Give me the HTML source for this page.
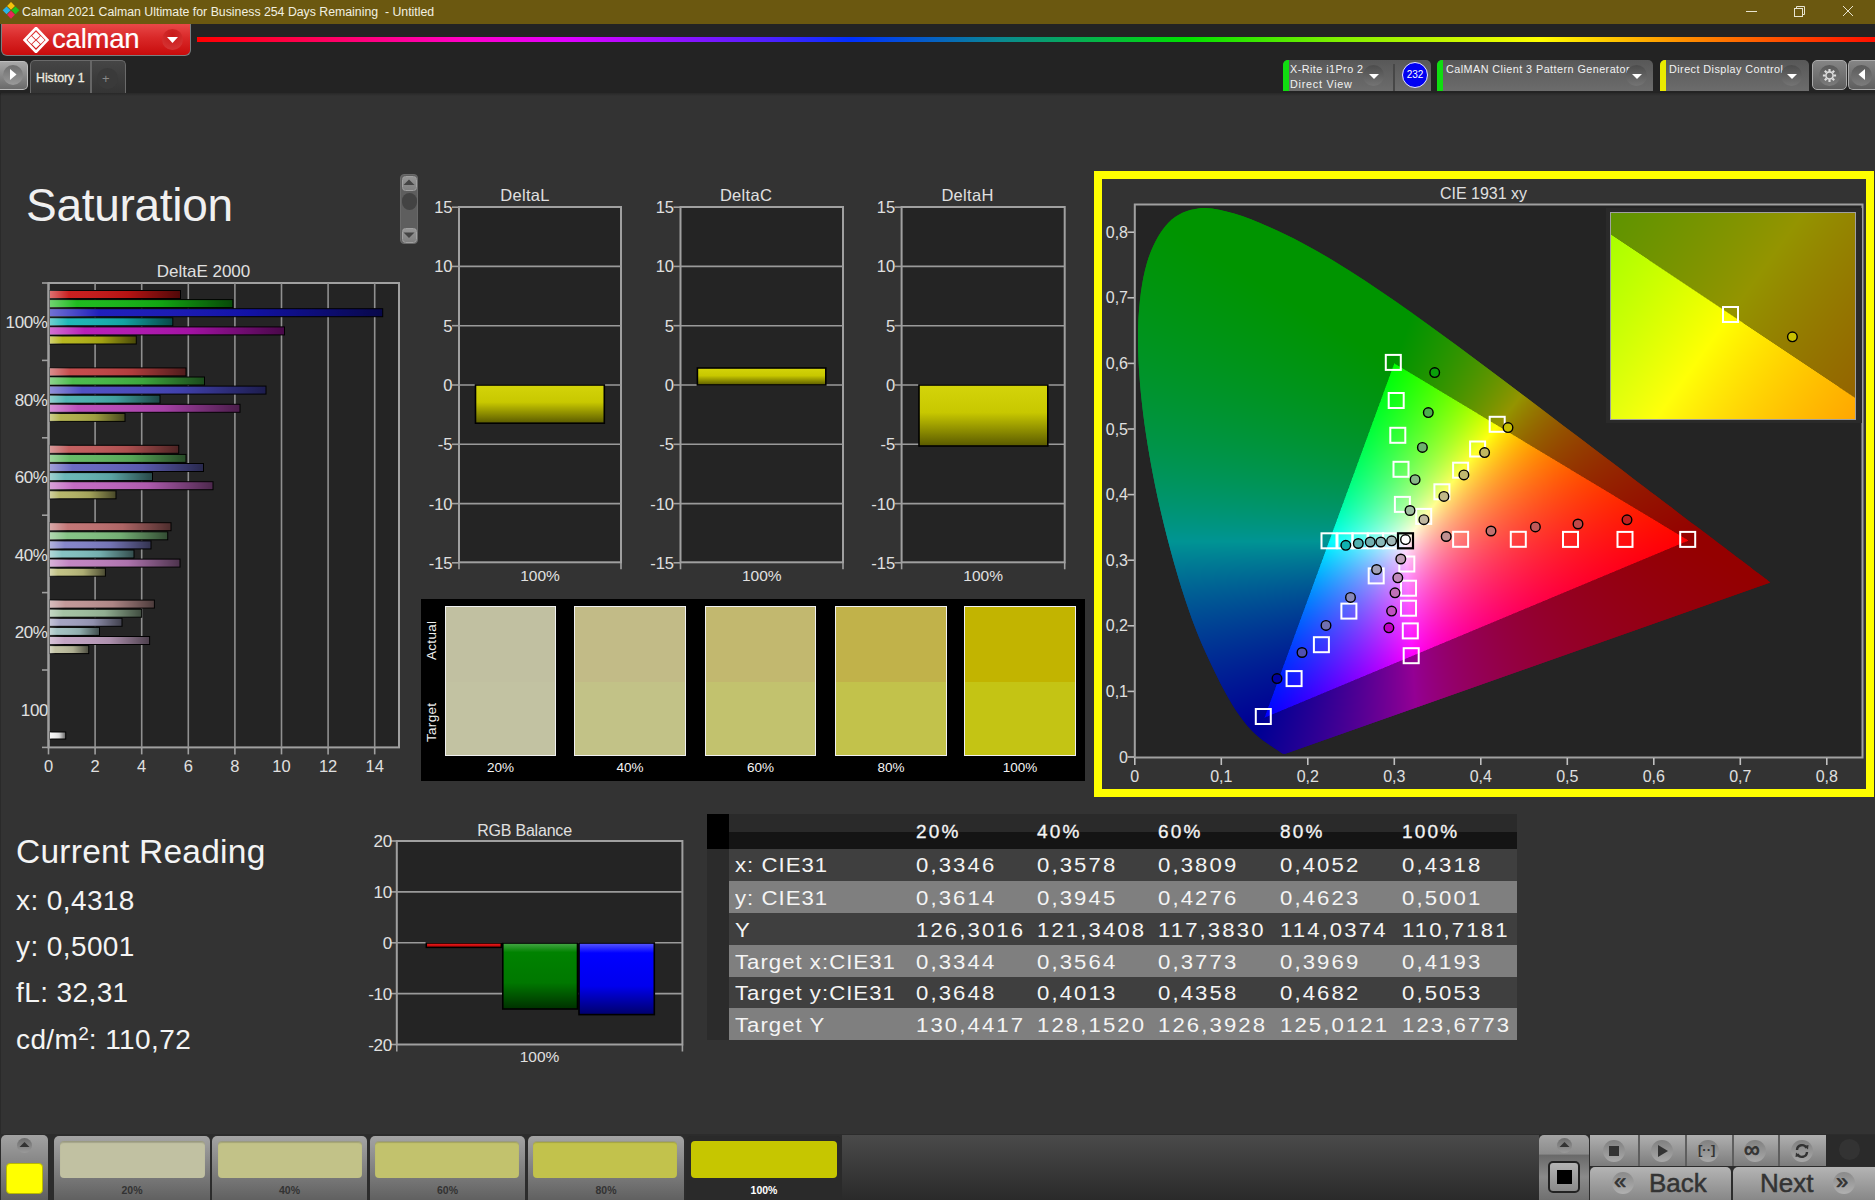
<!DOCTYPE html>
<html><head><meta charset="utf-8">
<style>
*{margin:0;padding:0;box-sizing:border-box}
html,body{width:1875px;height:1200px;overflow:hidden;background:#333;font-family:"Liberation Sans",sans-serif;color:#e6e6e6}
.a{position:absolute}
#title{left:0;top:0;width:1875px;height:24px;background:#6b5810}
#title .t{left:22px;top:5px;font-size:12.3px;color:#f2f0e0;white-space:nowrap}
#hdr{left:0;top:24px;width:1875px;height:69px;background:#232323}
#main{left:0;top:93px;width:1875px;height:1042px;background:#333;border-left:1px solid #2a2a2a}
</style></head>
<body>
<!-- TITLE BAR -->
<div id="title" class="a">
  <svg class="a" style="left:1px;top:2px" width="20" height="20" viewBox="0 0 18 18">
    <rect x="6.5" y="1" width="5" height="5" transform="rotate(45 9 3.5)" fill="#f4c20d"/>
    <rect x="2.5" y="5" width="5" height="5" transform="rotate(45 5 7.5)" fill="#2ab4e8"/>
    <rect x="10.5" y="5" width="5" height="5" transform="rotate(45 13 7.5)" fill="#1cc41c"/>
    <rect x="6.5" y="9" width="5" height="5" transform="rotate(45 9 11.5)" fill="#e8245c"/>
  </svg>
  <div class="a t">Calman 2021 Calman Ultimate for Business 254 Days Remaining &nbsp;- Untitled</div>
  <svg class="a" style="left:1740px;top:0" width="135" height="24">
    <line x1="1746" y1="11.5" x2="1757" y2="11.5" stroke="#e8e4d0" stroke-width="1" transform="translate(-1740 0)"/>
    <g transform="translate(-1740 0)" fill="none" stroke="#e8e4d0" stroke-width="1">
      <rect x="1794.5" y="8.5" width="8" height="8"/>
      <path d="M1796.5 8.5 V6.5 H1804.5 V14.5 H1802.5"/>
      <path d="M1843 6 L1853 16 M1853 6 L1843 16"/>
    </g>
  </svg>
</div>

<!-- HEADER -->
<div id="hdr" class="a">
  <!-- logo -->
  <div class="a" style="left:1px;top:0;width:190px;height:32px;border-radius:0 0 6px 6px;background:linear-gradient(#e84848,#d92828 45%,#c80c0c);border:1px solid #7a7f80;border-top:none"></div>
  <svg class="a" style="left:22.5px;top:2.5px" width="26" height="26" viewBox="1.5 1.5 25 24">
    <g fill="none" stroke="#fff" stroke-width="2.6">
      <path d="M14 2 L25 13.5 L14 25 L3 13.5 Z"/>
    </g>
    <g fill="#fff">
      <rect x="11.3" y="6.6" width="5.4" height="5.4" transform="rotate(45 14 9.3)"/>
      <rect x="6.8" y="10.8" width="5.4" height="5.4" transform="rotate(45 9.5 13.5)"/>
      <rect x="15.8" y="10.8" width="5.4" height="5.4" transform="rotate(45 18.5 13.5)"/>
      <rect x="11.3" y="15" width="5.4" height="5.4" transform="rotate(45 14 17.7)"/>
    </g>
  </svg>
  <div class="a" style="left:52px;top:-1px;font-size:27.5px;color:#fff;letter-spacing:-0.2px;-webkit-text-stroke:0.2px #fff">calman</div>
  <div class="a" style="left:162px;top:5px;width:21px;height:21px;border-radius:50%;background:radial-gradient(circle at 50% 30%,#c81818,#d83a3a)"></div>
  <svg class="a" style="left:166px;top:12px" width="13" height="8"><path d="M1 1 L12 1 L6.5 7 Z" fill="#fff"/></svg>
  <!-- rainbow -->
  <div class="a" style="left:197px;top:13px;width:1678px;height:5px;background:linear-gradient(90deg,#ff0000 0%,#ff00c8 16%,#e000ff 22%,#5020ff 34%,#0030ff 39%,#0a8a90 48%,#00e000 59%,#80f000 68%,#ffff00 80%,#ff9000 88.5%,#ff1000 100%)"></div>
  <!-- play button -->
  <div class="a" style="left:0;top:37px;width:28px;height:29px;border-radius:0 5px 5px 0;background:linear-gradient(#a8a8a8,#6a6a6a);border:1px solid #bdbdbd;border-left:none"></div>
  <div class="a" style="left:3px;top:41px;width:20px;height:20px;border-radius:50%;background:linear-gradient(#6e6e6e,#9a9a9a)"></div>
  <svg class="a" style="left:10px;top:45px" width="8" height="12"><path d="M0 0 L6.5 5.5 L0 11 Z" fill="#fff"/></svg>
  <!-- history tab -->
  <div class="a" style="left:30px;top:36px;width:96px;height:33px;border-radius:5px 5px 0 0;background:linear-gradient(#454545,#343434);border:1.5px solid #6a6a6a;border-bottom:none"></div>
  <div class="a" style="left:90px;top:37px;width:2px;height:32px;background:#666"></div>
  <div class="a" style="left:36px;top:46.5px;font-size:12.3px;color:#f0eee0;letter-spacing:0px;-webkit-text-stroke:0.3px #f0eee0">History 1</div>
  <div class="a" style="left:97px;top:44px;width:21px;height:21px;border-radius:50%;background:#3a3a3a"></div>
  <div class="a" style="left:102px;top:47px;font-size:13px;color:#888">+</div>
  <!-- device buttons -->
  <style>
  .dev{top:36px;height:31px;border-radius:5px 5px 0 0;background:linear-gradient(#585858,#6c6c6c);overflow:hidden}
  .dev .st{left:0;top:0;width:6px;height:31px}
  .dev .tx{font-size:10.8px;color:#f2f2f2;line-height:15.5px;white-space:nowrap;letter-spacing:0.45px}
  .dd{width:21px;height:21px;border-radius:50%;background:linear-gradient(#4c4c4c,#747474)}
  .dd:after{content:"";position:absolute;left:5.5px;top:8.5px;border-left:5px solid transparent;border-right:5px solid transparent;border-top:5px solid #fff}
  </style>
  <div class="a dev" style="left:1283px;width:148px"><div class="a st" style="background:#10dd10"></div>
    <div class="a tx" style="left:7px;top:1.5px;line-height:15px">X-Rite i1Pro 2<br><span style="letter-spacing:0.75px">Direct View</span></div>
    <div class="a dd" style="left:80px;top:5px"></div>
    <div class="a" style="left:110px;top:4px;width:2px;height:27px;background:#474747"></div>
    <div class="a" style="left:119px;top:2px;width:26px;height:26px;border-radius:50%;background:#0000f2;border:1px solid #e8e8ff"></div>
    <div class="a" style="left:119px;top:9px;width:26px;text-align:center;font-size:10px;color:#fff">232</div>
  </div>
  <div class="a dev" style="left:1437px;width:216px"><div class="a st" style="background:#10dd10"></div>
    <div class="a tx" style="left:9px;top:1.5px">CalMAN Client 3 Pattern Generator</div>
    <div class="a dd" style="left:189px;top:5px"></div>
  </div>
  <div class="a dev" style="left:1660px;width:149px"><div class="a st" style="background:#eaea00"></div>
    <div class="a tx" style="left:9px;top:1.5px">Direct Display Control</div>
    <div class="a dd" style="left:121px;top:5px"></div>
  </div>
  <div class="a" style="left:1812px;top:36px;width:35px;height:30px;border-radius:5px;background:linear-gradient(#858585,#5e5e5e);border:1px solid #aaa"></div>
  <div class="a" style="left:1819px;top:41px;width:21px;height:21px;border-radius:50%;background:linear-gradient(#5a5a5a,#7c7c7c)"></div>
  <svg class="a" style="left:1822px;top:44px" width="15" height="15" viewBox="-7.5 -7.5 15 15">
    <g fill="none" stroke="#ddd" stroke-width="1.6"><circle r="3.6"/></g>
    <g stroke="#ddd" stroke-width="2.2" stroke-linecap="butt">
      <path d="M0 -6.6 V-4.2 M0 6.6 V4.2 M-6.6 0 H-4.2 M6.6 0 H4.2 M-4.67 -4.67 L-2.97 -2.97 M4.67 4.67 L2.97 2.97 M-4.67 4.67 L-2.97 2.97 M4.67 -4.67 L2.97 -2.97"/>
    </g>
  </svg>
  <div class="a" style="left:1848px;top:36px;width:30px;height:30px;border-radius:5px 0 0 5px;background:linear-gradient(#858585,#5e5e5e);border:1px solid #aaa;border-right:none"></div>
  <div class="a" style="left:1851px;top:41px;width:21px;height:21px;border-radius:50%;background:linear-gradient(#5a5a5a,#7c7c7c)"></div>
  <svg class="a" style="left:1858px;top:45px" width="8" height="12"><path d="M7 0 L0.5 5.5 L7 11 Z" fill="#fff"/></svg>
</div>


<div id="main" class="a"></div>
<div class="a" style="left:0;top:93px;width:1875px;height:3px;background:linear-gradient(rgba(0,0,0,0.22),rgba(0,0,0,0))"></div>
<div class="a" style="left:26px;top:177.5px;font-size:46px;color:#f0f0f0;letter-spacing:-0.3px;white-space:nowrap">Saturation</div>
<div class="a" style="left:400px;top:174px;width:18px;height:70px;border-radius:4px;background:#5e5e5e;border:1px solid #6a6a6a"></div>
<div class="a" style="left:401.5px;top:175.5px;width:15px;height:15px;border-radius:3.5px;background:linear-gradient(#959595,#808080);border:1px solid #a0a0a0"></div>
<svg class="a" style="left:403px;top:179px" width="12" height="7"><path d="M0.5 6 L6 0.5 L11.5 6 Z" fill="#444"/></svg>
<div class="a" style="left:401.5px;top:193px;width:15px;height:17px;border-radius:7.5px;background:#434343"></div>
<div class="a" style="left:401.5px;top:228px;width:15px;height:15px;border-radius:3.5px;background:linear-gradient(#959595,#808080);border:1px solid #a0a0a0"></div>
<svg class="a" style="left:403px;top:232px" width="12" height="7"><path d="M0.5 0.5 L11.5 0.5 L6 6 Z" fill="#444"/></svg>
<div class="a" style="left:421px;top:599px;width:664px;height:182px;background:#000"></div>
<div class="a" style="left:445px;top:606px;width:111px;height:150px;border:1.3px solid #f0f0f0;background:linear-gradient(#c1c0a1 50.5%,#c2c2a2 50.5%)"></div>
<div class="a" style="left:435px;top:760px;width:131px;text-align:center;font-size:13.5px;color:#f4f4f4">20%</div>
<div class="a" style="left:574px;top:606px;width:112px;height:150px;border:1.3px solid #f0f0f0;background:linear-gradient(#c2bb87 50.5%,#c2c287 50.5%)"></div>
<div class="a" style="left:564px;top:760px;width:132px;text-align:center;font-size:13.5px;color:#f4f4f4">40%</div>
<div class="a" style="left:705px;top:606px;width:111px;height:150px;border:1.3px solid #f0f0f0;background:linear-gradient(#c2b86f 50.5%,#c2c26e 50.5%)"></div>
<div class="a" style="left:695px;top:760px;width:131px;text-align:center;font-size:13.5px;color:#f4f4f4">60%</div>
<div class="a" style="left:835px;top:606px;width:112px;height:150px;border:1.3px solid #f0f0f0;background:linear-gradient(#c1b24a 50.5%,#c2c24b 50.5%)"></div>
<div class="a" style="left:825px;top:760px;width:132px;text-align:center;font-size:13.5px;color:#f4f4f4">80%</div>
<div class="a" style="left:964px;top:606px;width:112px;height:150px;border:1.3px solid #f0f0f0;background:linear-gradient(#c2b400 50.5%,#c4c414 50.5%)"></div>
<div class="a" style="left:954px;top:760px;width:132px;text-align:center;font-size:13.5px;color:#f4f4f4">100%</div>
<div class="a" style="left:421.5px;top:632px;width:20px;height:16px;transform:rotate(-90deg);transform-origin:50% 50%;font-size:13.5px;color:#f0f0f0;white-space:nowrap;text-align:center;letter-spacing:0.3px"><span style="position:relative;left:-10px">Actual</span></div>
<div class="a" style="left:421.5px;top:714px;width:20px;height:16px;transform:rotate(-90deg);transform-origin:50% 50%;font-size:13.5px;color:#f0f0f0;white-space:nowrap;text-align:center;letter-spacing:0.3px"><span style="position:relative;left:-10px">Target</span></div>
<div class="a" style="left:16px;top:833px;font-size:33.5px;color:#f4f4f4;white-space:nowrap;letter-spacing:0.25px">Current Reading</div>
<div class="a" style="left:16px;top:885px;font-size:28px;color:#f4f4f4;white-space:nowrap;letter-spacing:0.4px">x: 0,4318</div>
<div class="a" style="left:16px;top:931px;font-size:28px;color:#f4f4f4;white-space:nowrap;letter-spacing:0.4px">y: 0,5001</div>
<div class="a" style="left:16px;top:977px;font-size:28px;color:#f4f4f4;white-space:nowrap;letter-spacing:0.4px">fL: 32,31</div>
<div class="a" style="left:16px;top:1023px;font-size:28px;color:#f4f4f4;white-space:nowrap;letter-spacing:0.4px">cd/m<span style="font-size:19px;vertical-align:9px;letter-spacing:0">2</span>: 110,72</div>
<div class="a" style="left:707px;top:814px;width:810px;height:35px;background:linear-gradient(#2a2a2a 50%,#141414 50%)"></div>
<div class="a" style="left:707px;top:814px;width:22px;height:35px;background:#000"></div>
<div class="a" style="left:916px;top:821px;font-size:19px;color:#f4f4f4;letter-spacing:2.2px;-webkit-text-stroke:0.3px #f4f4f4">20%</div>
<div class="a" style="left:1037px;top:821px;font-size:19px;color:#f4f4f4;letter-spacing:2.2px;-webkit-text-stroke:0.3px #f4f4f4">40%</div>
<div class="a" style="left:1158px;top:821px;font-size:19px;color:#f4f4f4;letter-spacing:2.2px;-webkit-text-stroke:0.3px #f4f4f4">60%</div>
<div class="a" style="left:1280px;top:821px;font-size:19px;color:#f4f4f4;letter-spacing:2.2px;-webkit-text-stroke:0.3px #f4f4f4">80%</div>
<div class="a" style="left:1402px;top:821px;font-size:19px;color:#f4f4f4;letter-spacing:2.2px;-webkit-text-stroke:0.3px #f4f4f4">100%</div>
<div class="a" style="left:729px;top:848.7px;width:788px;height:32.3px;background:#3f3f3f"></div>
<div class="a" style="left:707px;top:848.7px;width:22px;height:32.3px;background:#2b2b2b"></div>
<div class="a" style="left:735px;top:853.2px;font-size:20.5px;color:#f4f4f4;letter-spacing:0.95px;white-space:nowrap;transform:scaleX(1.08);transform-origin:0 0">x: CIE31</div>
<div class="a" style="left:916px;top:853.2px;font-size:20.5px;color:#f4f4f4;letter-spacing:1.95px;white-space:nowrap;transform:scaleX(1.08);transform-origin:0 0">0,3346</div>
<div class="a" style="left:1037px;top:853.2px;font-size:20.5px;color:#f4f4f4;letter-spacing:1.95px;white-space:nowrap;transform:scaleX(1.08);transform-origin:0 0">0,3578</div>
<div class="a" style="left:1158px;top:853.2px;font-size:20.5px;color:#f4f4f4;letter-spacing:1.95px;white-space:nowrap;transform:scaleX(1.08);transform-origin:0 0">0,3809</div>
<div class="a" style="left:1280px;top:853.2px;font-size:20.5px;color:#f4f4f4;letter-spacing:1.95px;white-space:nowrap;transform:scaleX(1.08);transform-origin:0 0">0,4052</div>
<div class="a" style="left:1402px;top:853.2px;font-size:20.5px;color:#f4f4f4;letter-spacing:1.95px;white-space:nowrap;transform:scaleX(1.08);transform-origin:0 0">0,4318</div>
<div class="a" style="left:729px;top:881.0px;width:788px;height:32.0px;background:#7f7f7f"></div>
<div class="a" style="left:707px;top:881.0px;width:22px;height:32.0px;background:#2b2b2b"></div>
<div class="a" style="left:735px;top:885.5px;font-size:20.5px;color:#f4f4f4;letter-spacing:0.95px;white-space:nowrap;transform:scaleX(1.08);transform-origin:0 0">y: CIE31</div>
<div class="a" style="left:916px;top:885.5px;font-size:20.5px;color:#f4f4f4;letter-spacing:1.95px;white-space:nowrap;transform:scaleX(1.08);transform-origin:0 0">0,3614</div>
<div class="a" style="left:1037px;top:885.5px;font-size:20.5px;color:#f4f4f4;letter-spacing:1.95px;white-space:nowrap;transform:scaleX(1.08);transform-origin:0 0">0,3945</div>
<div class="a" style="left:1158px;top:885.5px;font-size:20.5px;color:#f4f4f4;letter-spacing:1.95px;white-space:nowrap;transform:scaleX(1.08);transform-origin:0 0">0,4276</div>
<div class="a" style="left:1280px;top:885.5px;font-size:20.5px;color:#f4f4f4;letter-spacing:1.95px;white-space:nowrap;transform:scaleX(1.08);transform-origin:0 0">0,4623</div>
<div class="a" style="left:1402px;top:885.5px;font-size:20.5px;color:#f4f4f4;letter-spacing:1.95px;white-space:nowrap;transform:scaleX(1.08);transform-origin:0 0">0,5001</div>
<div class="a" style="left:729px;top:913.0px;width:788px;height:32.2px;background:#3f3f3f"></div>
<div class="a" style="left:707px;top:913.0px;width:22px;height:32.2px;background:#2b2b2b"></div>
<div class="a" style="left:735px;top:917.5px;font-size:20.5px;color:#f4f4f4;letter-spacing:0.95px;white-space:nowrap;transform:scaleX(1.08);transform-origin:0 0">Y</div>
<div class="a" style="left:916px;top:917.5px;font-size:20.5px;color:#f4f4f4;letter-spacing:1.95px;white-space:nowrap;transform:scaleX(1.08);transform-origin:0 0">126,3016</div>
<div class="a" style="left:1037px;top:917.5px;font-size:20.5px;color:#f4f4f4;letter-spacing:1.95px;white-space:nowrap;transform:scaleX(1.08);transform-origin:0 0">121,3408</div>
<div class="a" style="left:1158px;top:917.5px;font-size:20.5px;color:#f4f4f4;letter-spacing:1.95px;white-space:nowrap;transform:scaleX(1.08);transform-origin:0 0">117,3830</div>
<div class="a" style="left:1280px;top:917.5px;font-size:20.5px;color:#f4f4f4;letter-spacing:1.95px;white-space:nowrap;transform:scaleX(1.08);transform-origin:0 0">114,0374</div>
<div class="a" style="left:1402px;top:917.5px;font-size:20.5px;color:#f4f4f4;letter-spacing:1.95px;white-space:nowrap;transform:scaleX(1.08);transform-origin:0 0">110,7181</div>
<div class="a" style="left:729px;top:945.2px;width:788px;height:31.5px;background:#7f7f7f"></div>
<div class="a" style="left:707px;top:945.2px;width:22px;height:31.5px;background:#2b2b2b"></div>
<div class="a" style="left:735px;top:949.7px;font-size:20.5px;color:#f4f4f4;letter-spacing:0.95px;white-space:nowrap;transform:scaleX(1.08);transform-origin:0 0">Target x:CIE31</div>
<div class="a" style="left:916px;top:949.7px;font-size:20.5px;color:#f4f4f4;letter-spacing:1.95px;white-space:nowrap;transform:scaleX(1.08);transform-origin:0 0">0,3344</div>
<div class="a" style="left:1037px;top:949.7px;font-size:20.5px;color:#f4f4f4;letter-spacing:1.95px;white-space:nowrap;transform:scaleX(1.08);transform-origin:0 0">0,3564</div>
<div class="a" style="left:1158px;top:949.7px;font-size:20.5px;color:#f4f4f4;letter-spacing:1.95px;white-space:nowrap;transform:scaleX(1.08);transform-origin:0 0">0,3773</div>
<div class="a" style="left:1280px;top:949.7px;font-size:20.5px;color:#f4f4f4;letter-spacing:1.95px;white-space:nowrap;transform:scaleX(1.08);transform-origin:0 0">0,3969</div>
<div class="a" style="left:1402px;top:949.7px;font-size:20.5px;color:#f4f4f4;letter-spacing:1.95px;white-space:nowrap;transform:scaleX(1.08);transform-origin:0 0">0,4193</div>
<div class="a" style="left:729px;top:976.7px;width:788px;height:31.7px;background:#3f3f3f"></div>
<div class="a" style="left:707px;top:976.7px;width:22px;height:31.7px;background:#2b2b2b"></div>
<div class="a" style="left:735px;top:981.2px;font-size:20.5px;color:#f4f4f4;letter-spacing:0.95px;white-space:nowrap;transform:scaleX(1.08);transform-origin:0 0">Target y:CIE31</div>
<div class="a" style="left:916px;top:981.2px;font-size:20.5px;color:#f4f4f4;letter-spacing:1.95px;white-space:nowrap;transform:scaleX(1.08);transform-origin:0 0">0,3648</div>
<div class="a" style="left:1037px;top:981.2px;font-size:20.5px;color:#f4f4f4;letter-spacing:1.95px;white-space:nowrap;transform:scaleX(1.08);transform-origin:0 0">0,4013</div>
<div class="a" style="left:1158px;top:981.2px;font-size:20.5px;color:#f4f4f4;letter-spacing:1.95px;white-space:nowrap;transform:scaleX(1.08);transform-origin:0 0">0,4358</div>
<div class="a" style="left:1280px;top:981.2px;font-size:20.5px;color:#f4f4f4;letter-spacing:1.95px;white-space:nowrap;transform:scaleX(1.08);transform-origin:0 0">0,4682</div>
<div class="a" style="left:1402px;top:981.2px;font-size:20.5px;color:#f4f4f4;letter-spacing:1.95px;white-space:nowrap;transform:scaleX(1.08);transform-origin:0 0">0,5053</div>
<div class="a" style="left:729px;top:1008.4px;width:788px;height:31.6px;background:#7f7f7f"></div>
<div class="a" style="left:707px;top:1008.4px;width:22px;height:31.6px;background:#2b2b2b"></div>
<div class="a" style="left:735px;top:1012.9px;font-size:20.5px;color:#f4f4f4;letter-spacing:0.95px;white-space:nowrap;transform:scaleX(1.08);transform-origin:0 0">Target Y</div>
<div class="a" style="left:916px;top:1012.9px;font-size:20.5px;color:#f4f4f4;letter-spacing:1.95px;white-space:nowrap;transform:scaleX(1.08);transform-origin:0 0">130,4417</div>
<div class="a" style="left:1037px;top:1012.9px;font-size:20.5px;color:#f4f4f4;letter-spacing:1.95px;white-space:nowrap;transform:scaleX(1.08);transform-origin:0 0">128,1520</div>
<div class="a" style="left:1158px;top:1012.9px;font-size:20.5px;color:#f4f4f4;letter-spacing:1.95px;white-space:nowrap;transform:scaleX(1.08);transform-origin:0 0">126,3928</div>
<div class="a" style="left:1280px;top:1012.9px;font-size:20.5px;color:#f4f4f4;letter-spacing:1.95px;white-space:nowrap;transform:scaleX(1.08);transform-origin:0 0">125,0121</div>
<div class="a" style="left:1402px;top:1012.9px;font-size:20.5px;color:#f4f4f4;letter-spacing:1.95px;white-space:nowrap;transform:scaleX(1.08);transform-origin:0 0">123,6773</div>
<div class="a" style="left:0;top:1134px;width:1875px;height:66px;background:#2c2c2c"></div>
<div class="a" style="left:842px;top:1135px;width:697px;height:65px;background:linear-gradient(#4a4a4a,#2a2a2a)"></div>
<div class="a" style="left:1px;top:1135px;width:47px;height:70px;border-radius:5px;background:linear-gradient(#a2a2a2,#5a5a5a)"></div>
<div class="a" style="left:17px;top:1138px;width:15px;height:15px;border-radius:50%;background:linear-gradient(#6a6a6a,#9a9a9a)"></div>
<svg class="a" style="left:19px;top:1141px" width="11" height="7"><path d="M0.5 6 L5.5 1 L10.5 6 Z" fill="#333"/></svg>
<div class="a" style="left:6px;top:1163px;width:37px;height:31px;border-radius:4px;background:#ffff00;border:1px solid #b8b800"></div>
<div class="a" style="left:54px;top:1136px;width:156px;height:70px;border-radius:5px;background:linear-gradient(#a4a4a4,#5a5a5a)"></div>
<div class="a" style="left:60px;top:1141px;width:145px;height:37px;border-radius:4px;background:#c1c1a2;border-top:1px solid #9a9a80;box-shadow:inset 0 1px 1px rgba(0,0,0,0.15)"></div>
<div class="a" style="left:54px;top:1184px;width:156px;text-align:center;font-size:10.5px;font-weight:bold;color:#333">20%</div>
<div class="a" style="left:212px;top:1136px;width:155px;height:70px;border-radius:5px;background:linear-gradient(#a4a4a4,#5a5a5a)"></div>
<div class="a" style="left:218px;top:1141px;width:144px;height:37px;border-radius:4px;background:#c2c288;border-top:1px solid #9a9a80;box-shadow:inset 0 1px 1px rgba(0,0,0,0.15)"></div>
<div class="a" style="left:212px;top:1184px;width:155px;text-align:center;font-size:10.5px;font-weight:bold;color:#333">40%</div>
<div class="a" style="left:370px;top:1136px;width:155px;height:70px;border-radius:5px;background:linear-gradient(#a4a4a4,#5a5a5a)"></div>
<div class="a" style="left:375px;top:1141px;width:144px;height:37px;border-radius:4px;background:#c2c26d;border-top:1px solid #9a9a80;box-shadow:inset 0 1px 1px rgba(0,0,0,0.15)"></div>
<div class="a" style="left:370px;top:1184px;width:155px;text-align:center;font-size:10.5px;font-weight:bold;color:#333">60%</div>
<div class="a" style="left:528px;top:1136px;width:156px;height:70px;border-radius:5px;background:linear-gradient(#a4a4a4,#5a5a5a)"></div>
<div class="a" style="left:533px;top:1141px;width:144px;height:37px;border-radius:4px;background:#c2c24c;border-top:1px solid #9a9a80;box-shadow:inset 0 1px 1px rgba(0,0,0,0.15)"></div>
<div class="a" style="left:528px;top:1184px;width:156px;text-align:center;font-size:10.5px;font-weight:bold;color:#333">80%</div>
<div class="a" style="left:686px;top:1136px;width:156px;height:70px;border-radius:5px;background:#2a2a2a"></div>
<div class="a" style="left:691px;top:1141px;width:146px;height:37px;border-radius:4px;background:#c6c600"></div>
<div class="a" style="left:686px;top:1184px;width:156px;text-align:center;font-size:10.5px;font-weight:bold;color:#fff">100%</div>
<div class="a" style="left:1539px;top:1135px;width:50px;height:70px;border-radius:5px;background:linear-gradient(#a4a4a4 0,#8c8c8c 27%,#6a6a6a 29%,#8a8a8a 60%,#6a6a6a 100%)"></div>
<div class="a" style="left:1557px;top:1138px;width:15px;height:15px;border-radius:50%;background:linear-gradient(#6c6c6c,#9a9a9a)"></div>
<svg class="a" style="left:1559px;top:1141px" width="11" height="7"><path d="M0.5 6 L5.5 1 L10.5 6 Z" fill="#333"/></svg>
<div class="a" style="left:1548px;top:1161px;width:32px;height:32px;border-radius:5px;border:2.5px solid #222;background:linear-gradient(#b4b4b4,#8a8a8a)"></div>
<div class="a" style="left:1557px;top:1170px;width:15px;height:14px;background:#000"></div>
<div class="a" style="left:1590px;top:1135px;width:236px;height:31px;background:linear-gradient(#b0b0b0,#7c7c7c)"></div>
<div class="a" style="left:1638px;top:1135px;width:2px;height:31px;background:#5e5e5e"></div>
<div class="a" style="left:1685px;top:1135px;width:2px;height:31px;background:#5e5e5e"></div>
<div class="a" style="left:1732px;top:1135px;width:2px;height:31px;background:#5e5e5e"></div>
<div class="a" style="left:1778px;top:1135px;width:2px;height:31px;background:#5e5e5e"></div>
<div class="a" style="left:1603px;top:1140px;width:22px;height:22px;border-radius:50%;background:linear-gradient(#808080,#a8a8a8)"></div>
<div class="a" style="left:1651px;top:1140px;width:22px;height:22px;border-radius:50%;background:linear-gradient(#808080,#a8a8a8)"></div>
<div class="a" style="left:1697px;top:1140px;width:22px;height:22px;border-radius:50%;background:linear-gradient(#808080,#a8a8a8)"></div>
<div class="a" style="left:1744px;top:1140px;width:22px;height:22px;border-radius:50%;background:linear-gradient(#808080,#a8a8a8)"></div>
<div class="a" style="left:1791px;top:1140px;width:22px;height:22px;border-radius:50%;background:linear-gradient(#808080,#a8a8a8)"></div>
<div class="a" style="left:1609px;top:1146px;width:10px;height:10px;background:#333"></div>
<svg class="a" style="left:1657px;top:1144px" width="12" height="14"><path d="M1 1 L11 7 L1 13 Z" fill="#333"/></svg>
<div class="a" style="left:1698px;top:1142px;font-size:13px;font-weight:bold;color:#333">[&#183;&#183;]</div>
<div class="a" style="left:1744px;top:1137px;font-size:22px;color:#333;-webkit-text-stroke:0.8px #333">&#8734;</div>
<svg class="a" style="left:1794px;top:1143px" width="16" height="16" viewBox="0 0 16 16"><path d="M3 7 A5 5 0 0 1 12.5 5" fill="none" stroke="#333" stroke-width="2.4"/><path d="M13 9 A5 5 0 0 1 3.5 11" fill="none" stroke="#333" stroke-width="2.4"/><path d="M10 3 L14.5 2 L14 6.5 Z M6 13 L1.5 14 L2 9.5 Z" fill="#333"/></svg>
<div class="a" style="left:1826px;top:1135px;width:49px;height:31px;background:#2a2a2a"></div>
<div class="a" style="left:1839px;top:1139px;width:21px;height:21px;border-radius:50%;background:#333"></div>
<div class="a" style="left:1590px;top:1167px;width:141px;height:40px;border-radius:5px 5px 0 0;background:linear-gradient(#b4b4b4,#7e7e7e)"></div>
<div class="a" style="left:1733px;top:1167px;width:145px;height:40px;border-radius:5px 0 0 0;background:linear-gradient(#b4b4b4,#7e7e7e)"></div>
<div class="a" style="left:1612px;top:1172px;width:22px;height:22px;border-radius:50%;background:linear-gradient(#8a8a8a,#b0b0b0)"></div>
<div class="a" style="left:1614px;top:1169px;font-size:22px;color:#333;-webkit-text-stroke:0.6px #333">&#171;</div>
<div class="a" style="left:1833px;top:1172px;width:22px;height:22px;border-radius:50%;background:linear-gradient(#8a8a8a,#b0b0b0)"></div>
<div class="a" style="left:1836px;top:1169px;font-size:22px;color:#333;-webkit-text-stroke:0.6px #333">&#187;</div>
<div class="a" style="left:1649px;top:1168px;font-size:26px;color:#333;-webkit-text-stroke:0.5px #333">Back</div>
<div class="a" style="left:1760px;top:1168px;font-size:26px;color:#333;-webkit-text-stroke:0.5px #333">Next</div>
<svg class="a" style="left:0;top:0" width="1875" height="1200"><defs><linearGradient id="gsh" x1="0" x2="1" y1="0" y2="0"><stop offset="0" stop-color="#fff" stop-opacity="0.4"/><stop offset="0.15" stop-color="#fff" stop-opacity="0.05"/><stop offset="0.6" stop-color="#000" stop-opacity="0.1"/><stop offset="1" stop-color="#000" stop-opacity="0.6"/></linearGradient><linearGradient id="gy" x1="0" x2="0" y1="0" y2="1"><stop offset="0" stop-color="#d4d40a"/><stop offset="0.45" stop-color="#c8c800"/><stop offset="1" stop-color="#5a5a00"/></linearGradient><linearGradient id="gr" x1="0" x2="0" y1="0" y2="1"><stop offset="0" stop-color="#ff2020"/><stop offset="1" stop-color="#a00000"/></linearGradient><linearGradient id="gg" x1="0" x2="0" y1="0" y2="1"><stop offset="0" stop-color="#48a848"/><stop offset="0.14" stop-color="#008200"/><stop offset="0.6" stop-color="#007800"/><stop offset="1" stop-color="#003000"/></linearGradient><linearGradient id="gb" x1="0" x2="0" y1="0" y2="1"><stop offset="0" stop-color="#5a5aff"/><stop offset="0.14" stop-color="#0000ff"/><stop offset="0.6" stop-color="#0000ee"/><stop offset="1" stop-color="#00006a"/></linearGradient></defs><rect x="48.5" y="283" width="350.5" height="464.4" fill="#242424" stroke="#a0a0a0" stroke-width="2"/><line x1="95.1" y1="283" x2="95.1" y2="747.4" stroke="#909090" stroke-width="1.6"/><line x1="141.7" y1="283" x2="141.7" y2="747.4" stroke="#909090" stroke-width="1.6"/><line x1="188.3" y1="283" x2="188.3" y2="747.4" stroke="#909090" stroke-width="1.6"/><line x1="234.9" y1="283" x2="234.9" y2="747.4" stroke="#909090" stroke-width="1.6"/><line x1="281.5" y1="283" x2="281.5" y2="747.4" stroke="#909090" stroke-width="1.6"/><line x1="328.1" y1="283" x2="328.1" y2="747.4" stroke="#909090" stroke-width="1.6"/><line x1="374.7" y1="283" x2="374.7" y2="747.4" stroke="#909090" stroke-width="1.6"/><line x1="42" y1="283.0" x2="48.5" y2="283.0" stroke="#a0a0a0" stroke-width="1.6"/><line x1="42" y1="360.4" x2="48.5" y2="360.4" stroke="#a0a0a0" stroke-width="1.6"/><line x1="42" y1="437.8" x2="48.5" y2="437.8" stroke="#a0a0a0" stroke-width="1.6"/><line x1="42" y1="515.2" x2="48.5" y2="515.2" stroke="#a0a0a0" stroke-width="1.6"/><line x1="42" y1="592.6" x2="48.5" y2="592.6" stroke="#a0a0a0" stroke-width="1.6"/><line x1="42" y1="670.0" x2="48.5" y2="670.0" stroke="#a0a0a0" stroke-width="1.6"/><line x1="42" y1="747.4" x2="48.5" y2="747.4" stroke="#a0a0a0" stroke-width="1.6"/><line x1="48.5" y1="747.4" x2="48.5" y2="754.4" stroke="#a0a0a0" stroke-width="1.6"/><text x="48.5" y="772" font-size="16.5" text-anchor="middle" font-family="Liberation Sans" fill="#e0e0e0">0</text><line x1="95.1" y1="747.4" x2="95.1" y2="754.4" stroke="#a0a0a0" stroke-width="1.6"/><text x="95.1" y="772" font-size="16.5" text-anchor="middle" font-family="Liberation Sans" fill="#e0e0e0">2</text><line x1="141.7" y1="747.4" x2="141.7" y2="754.4" stroke="#a0a0a0" stroke-width="1.6"/><text x="141.7" y="772" font-size="16.5" text-anchor="middle" font-family="Liberation Sans" fill="#e0e0e0">4</text><line x1="188.3" y1="747.4" x2="188.3" y2="754.4" stroke="#a0a0a0" stroke-width="1.6"/><text x="188.3" y="772" font-size="16.5" text-anchor="middle" font-family="Liberation Sans" fill="#e0e0e0">6</text><line x1="234.9" y1="747.4" x2="234.9" y2="754.4" stroke="#a0a0a0" stroke-width="1.6"/><text x="234.9" y="772" font-size="16.5" text-anchor="middle" font-family="Liberation Sans" fill="#e0e0e0">8</text><line x1="281.5" y1="747.4" x2="281.5" y2="754.4" stroke="#a0a0a0" stroke-width="1.6"/><text x="281.5" y="772" font-size="16.5" text-anchor="middle" font-family="Liberation Sans" fill="#e0e0e0">10</text><line x1="328.1" y1="747.4" x2="328.1" y2="754.4" stroke="#a0a0a0" stroke-width="1.6"/><text x="328.1" y="772" font-size="16.5" text-anchor="middle" font-family="Liberation Sans" fill="#e0e0e0">12</text><line x1="374.7" y1="747.4" x2="374.7" y2="754.4" stroke="#a0a0a0" stroke-width="1.6"/><text x="374.7" y="772" font-size="16.5" text-anchor="middle" font-family="Liberation Sans" fill="#e0e0e0">14</text><text x="47.5" y="328" font-size="17" letter-spacing="-0.4" text-anchor="end" font-family="Liberation Sans" fill="#e0e0e0">100%</text><text x="47.5" y="405.5" font-size="17" letter-spacing="-0.4" text-anchor="end" font-family="Liberation Sans" fill="#e0e0e0">80%</text><text x="47.5" y="483" font-size="17" letter-spacing="-0.4" text-anchor="end" font-family="Liberation Sans" fill="#e0e0e0">60%</text><text x="47.5" y="561" font-size="17" letter-spacing="-0.4" text-anchor="end" font-family="Liberation Sans" fill="#e0e0e0">40%</text><text x="47.5" y="637.5" font-size="17" letter-spacing="-0.4" text-anchor="end" font-family="Liberation Sans" fill="#e0e0e0">20%</text><text x="48" y="715.5" font-size="17" letter-spacing="-0.4" text-anchor="end" font-family="Liberation Sans" fill="#e0e0e0">100</text><text x="203.5" y="276.5" font-size="17" text-anchor="middle" font-family="Liberation Sans" fill="#e0e0e0">DeltaE 2000</text><rect x="49.5" y="290.5" width="131.0" height="8" fill="#c81414" stroke="#000" stroke-width="1"/><rect x="49.5" y="290.5" width="131.0" height="8" fill="url(#gsh)"/><rect x="49.5" y="299.6" width="183.3" height="8" fill="#14b814" stroke="#000" stroke-width="1"/><rect x="49.5" y="299.6" width="183.3" height="8" fill="url(#gsh)"/><rect x="49.5" y="308.7" width="333.2" height="8" fill="#1414b8" stroke="#000" stroke-width="1"/><rect x="49.5" y="308.7" width="333.2" height="8" fill="url(#gsh)"/><rect x="49.5" y="317.8" width="123.3" height="8" fill="#14b4b4" stroke="#000" stroke-width="1"/><rect x="49.5" y="317.8" width="123.3" height="8" fill="url(#gsh)"/><rect x="49.5" y="326.9" width="235.0" height="8" fill="#b414b4" stroke="#000" stroke-width="1"/><rect x="49.5" y="326.9" width="235.0" height="8" fill="url(#gsh)"/><rect x="49.5" y="336.0" width="86.8" height="8" fill="#b4b414" stroke="#000" stroke-width="1"/><rect x="49.5" y="336.0" width="86.8" height="8" fill="url(#gsh)"/><rect x="49.5" y="367.9" width="136.5" height="8" fill="#c44444" stroke="#000" stroke-width="1"/><rect x="49.5" y="367.9" width="136.5" height="8" fill="url(#gsh)"/><rect x="49.5" y="377.0" width="155.0" height="8" fill="#44b844" stroke="#000" stroke-width="1"/><rect x="49.5" y="377.0" width="155.0" height="8" fill="url(#gsh)"/><rect x="49.5" y="386.1" width="216.5" height="8" fill="#4848c0" stroke="#000" stroke-width="1"/><rect x="49.5" y="386.1" width="216.5" height="8" fill="url(#gsh)"/><rect x="49.5" y="395.2" width="110.5" height="8" fill="#48b0b0" stroke="#000" stroke-width="1"/><rect x="49.5" y="395.2" width="110.5" height="8" fill="url(#gsh)"/><rect x="49.5" y="404.3" width="190.5" height="8" fill="#b848b8" stroke="#000" stroke-width="1"/><rect x="49.5" y="404.3" width="190.5" height="8" fill="url(#gsh)"/><rect x="49.5" y="413.4" width="75.5" height="8" fill="#b0b048" stroke="#000" stroke-width="1"/><rect x="49.5" y="413.4" width="75.5" height="8" fill="url(#gsh)"/><rect x="49.5" y="445.3" width="129.2" height="8" fill="#c05858" stroke="#000" stroke-width="1"/><rect x="49.5" y="445.3" width="129.2" height="8" fill="url(#gsh)"/><rect x="49.5" y="454.4" width="136.5" height="8" fill="#60b860" stroke="#000" stroke-width="1"/><rect x="49.5" y="454.4" width="136.5" height="8" fill="url(#gsh)"/><rect x="49.5" y="463.5" width="154.0" height="8" fill="#6464c0" stroke="#000" stroke-width="1"/><rect x="49.5" y="463.5" width="154.0" height="8" fill="url(#gsh)"/><rect x="49.5" y="472.6" width="103.0" height="8" fill="#64b4b4" stroke="#000" stroke-width="1"/><rect x="49.5" y="472.6" width="103.0" height="8" fill="url(#gsh)"/><rect x="49.5" y="481.7" width="163.5" height="8" fill="#c064c0" stroke="#000" stroke-width="1"/><rect x="49.5" y="481.7" width="163.5" height="8" fill="url(#gsh)"/><rect x="49.5" y="490.8" width="66.5" height="8" fill="#b4b464" stroke="#000" stroke-width="1"/><rect x="49.5" y="490.8" width="66.5" height="8" fill="url(#gsh)"/><rect x="49.5" y="522.7" width="121.5" height="8" fill="#c07070" stroke="#000" stroke-width="1"/><rect x="49.5" y="522.7" width="121.5" height="8" fill="url(#gsh)"/><rect x="49.5" y="531.8" width="118.2" height="8" fill="#80c080" stroke="#000" stroke-width="1"/><rect x="49.5" y="531.8" width="118.2" height="8" fill="url(#gsh)"/><rect x="49.5" y="540.9" width="101.5" height="8" fill="#8080c8" stroke="#000" stroke-width="1"/><rect x="49.5" y="540.9" width="101.5" height="8" fill="url(#gsh)"/><rect x="49.5" y="550.0" width="84.5" height="8" fill="#80c0c0" stroke="#000" stroke-width="1"/><rect x="49.5" y="550.0" width="84.5" height="8" fill="url(#gsh)"/><rect x="49.5" y="559.1" width="130.5" height="8" fill="#c080c0" stroke="#000" stroke-width="1"/><rect x="49.5" y="559.1" width="130.5" height="8" fill="url(#gsh)"/><rect x="49.5" y="568.2" width="55.9" height="8" fill="#c0c080" stroke="#000" stroke-width="1"/><rect x="49.5" y="568.2" width="55.9" height="8" fill="url(#gsh)"/><rect x="49.5" y="600.1" width="104.9" height="8" fill="#c09494" stroke="#000" stroke-width="1"/><rect x="49.5" y="600.1" width="104.9" height="8" fill="url(#gsh)"/><rect x="49.5" y="609.2" width="92.2" height="8" fill="#a0c0a0" stroke="#000" stroke-width="1"/><rect x="49.5" y="609.2" width="92.2" height="8" fill="url(#gsh)"/><rect x="49.5" y="618.3" width="72.5" height="8" fill="#a0a0c0" stroke="#000" stroke-width="1"/><rect x="49.5" y="618.3" width="72.5" height="8" fill="url(#gsh)"/><rect x="49.5" y="627.4" width="50.0" height="8" fill="#a0c0c0" stroke="#000" stroke-width="1"/><rect x="49.5" y="627.4" width="50.0" height="8" fill="url(#gsh)"/><rect x="49.5" y="636.5" width="100.1" height="8" fill="#c0a0c0" stroke="#000" stroke-width="1"/><rect x="49.5" y="636.5" width="100.1" height="8" fill="url(#gsh)"/><rect x="49.5" y="645.6" width="39.2" height="8" fill="#c0c0a0" stroke="#000" stroke-width="1"/><rect x="49.5" y="645.6" width="39.2" height="8" fill="url(#gsh)"/><rect x="49.5" y="732" width="16.2" height="7" fill="#f4f4f4" stroke="#000" stroke-width="1"/><rect x="49.5" y="732" width="16.2" height="7" fill="url(#gsh)"/><line x1="48.5" y1="283" x2="48.5" y2="747.4" stroke="#a0a0a0" stroke-width="2"/><rect x="459" y="207" width="162.0" height="355.3" fill="#242424" stroke="#a0a0a0" stroke-width="2"/><line x1="452" y1="207.2" x2="459" y2="207.2" stroke="#a0a0a0" stroke-width="1.6"/><text x="452.5" y="213.2" font-size="16.5" text-anchor="end" font-family="Liberation Sans" fill="#e0e0e0">15</text><line x1="459" y1="266.4" x2="621" y2="266.4" stroke="#9a9a9a" stroke-width="1.6"/><line x1="452" y1="266.4" x2="459" y2="266.4" stroke="#a0a0a0" stroke-width="1.6"/><text x="452.5" y="272.4" font-size="16.5" text-anchor="end" font-family="Liberation Sans" fill="#e0e0e0">10</text><line x1="459" y1="325.7" x2="621" y2="325.7" stroke="#9a9a9a" stroke-width="1.6"/><line x1="452" y1="325.7" x2="459" y2="325.7" stroke="#a0a0a0" stroke-width="1.6"/><text x="452.5" y="331.7" font-size="16.5" text-anchor="end" font-family="Liberation Sans" fill="#e0e0e0">5</text><line x1="459" y1="385.0" x2="621" y2="385.0" stroke="#9a9a9a" stroke-width="1.6"/><line x1="452" y1="385.0" x2="459" y2="385.0" stroke="#a0a0a0" stroke-width="1.6"/><text x="452.5" y="391.0" font-size="16.5" text-anchor="end" font-family="Liberation Sans" fill="#e0e0e0">0</text><line x1="459" y1="444.3" x2="621" y2="444.3" stroke="#9a9a9a" stroke-width="1.6"/><line x1="452" y1="444.3" x2="459" y2="444.3" stroke="#a0a0a0" stroke-width="1.6"/><text x="452.5" y="450.3" font-size="16.5" text-anchor="end" font-family="Liberation Sans" fill="#e0e0e0">-5</text><line x1="459" y1="503.6" x2="621" y2="503.6" stroke="#9a9a9a" stroke-width="1.6"/><line x1="452" y1="503.6" x2="459" y2="503.6" stroke="#a0a0a0" stroke-width="1.6"/><text x="452.5" y="509.6" font-size="16.5" text-anchor="end" font-family="Liberation Sans" fill="#e0e0e0">-10</text><line x1="452" y1="562.8" x2="459" y2="562.8" stroke="#a0a0a0" stroke-width="1.6"/><text x="452.5" y="568.8" font-size="16.5" text-anchor="end" font-family="Liberation Sans" fill="#e0e0e0">-15</text><line x1="459" y1="562.3" x2="459" y2="569.3" stroke="#a0a0a0" stroke-width="1.6"/><line x1="621" y1="562.3" x2="621" y2="569.3" stroke="#a0a0a0" stroke-width="1.6"/><text x="525" y="201" font-size="16.5" text-anchor="middle" letter-spacing="0.3" font-family="Liberation Sans" fill="#e0e0e0">DeltaL</text><text x="540.0" y="580.5" font-size="15.5" text-anchor="middle" font-family="Liberation Sans" fill="#e0e0e0">100%</text><rect x="475.5" y="385" width="128.8" height="38.2" fill="url(#gy)" stroke="#000" stroke-width="1.6"/><rect x="680.5" y="207" width="162.5" height="355.3" fill="#242424" stroke="#a0a0a0" stroke-width="2"/><line x1="673.5" y1="207.2" x2="680.5" y2="207.2" stroke="#a0a0a0" stroke-width="1.6"/><text x="674.0" y="213.2" font-size="16.5" text-anchor="end" font-family="Liberation Sans" fill="#e0e0e0">15</text><line x1="680.5" y1="266.4" x2="843" y2="266.4" stroke="#9a9a9a" stroke-width="1.6"/><line x1="673.5" y1="266.4" x2="680.5" y2="266.4" stroke="#a0a0a0" stroke-width="1.6"/><text x="674.0" y="272.4" font-size="16.5" text-anchor="end" font-family="Liberation Sans" fill="#e0e0e0">10</text><line x1="680.5" y1="325.7" x2="843" y2="325.7" stroke="#9a9a9a" stroke-width="1.6"/><line x1="673.5" y1="325.7" x2="680.5" y2="325.7" stroke="#a0a0a0" stroke-width="1.6"/><text x="674.0" y="331.7" font-size="16.5" text-anchor="end" font-family="Liberation Sans" fill="#e0e0e0">5</text><line x1="680.5" y1="385.0" x2="843" y2="385.0" stroke="#9a9a9a" stroke-width="1.6"/><line x1="673.5" y1="385.0" x2="680.5" y2="385.0" stroke="#a0a0a0" stroke-width="1.6"/><text x="674.0" y="391.0" font-size="16.5" text-anchor="end" font-family="Liberation Sans" fill="#e0e0e0">0</text><line x1="680.5" y1="444.3" x2="843" y2="444.3" stroke="#9a9a9a" stroke-width="1.6"/><line x1="673.5" y1="444.3" x2="680.5" y2="444.3" stroke="#a0a0a0" stroke-width="1.6"/><text x="674.0" y="450.3" font-size="16.5" text-anchor="end" font-family="Liberation Sans" fill="#e0e0e0">-5</text><line x1="680.5" y1="503.6" x2="843" y2="503.6" stroke="#9a9a9a" stroke-width="1.6"/><line x1="673.5" y1="503.6" x2="680.5" y2="503.6" stroke="#a0a0a0" stroke-width="1.6"/><text x="674.0" y="509.6" font-size="16.5" text-anchor="end" font-family="Liberation Sans" fill="#e0e0e0">-10</text><line x1="673.5" y1="562.8" x2="680.5" y2="562.8" stroke="#a0a0a0" stroke-width="1.6"/><text x="674.0" y="568.8" font-size="16.5" text-anchor="end" font-family="Liberation Sans" fill="#e0e0e0">-15</text><line x1="680.5" y1="562.3" x2="680.5" y2="569.3" stroke="#a0a0a0" stroke-width="1.6"/><line x1="843" y1="562.3" x2="843" y2="569.3" stroke="#a0a0a0" stroke-width="1.6"/><text x="746" y="201" font-size="16.5" text-anchor="middle" letter-spacing="0.3" font-family="Liberation Sans" fill="#e0e0e0">DeltaC</text><text x="761.8" y="580.5" font-size="15.5" text-anchor="middle" font-family="Liberation Sans" fill="#e0e0e0">100%</text><rect x="697.4" y="368" width="128.4" height="17.0" fill="url(#gy)" stroke="#000" stroke-width="1.6"/><rect x="901.6" y="207" width="163.1" height="355.3" fill="#242424" stroke="#a0a0a0" stroke-width="2"/><line x1="894.6" y1="207.2" x2="901.6" y2="207.2" stroke="#a0a0a0" stroke-width="1.6"/><text x="895.1" y="213.2" font-size="16.5" text-anchor="end" font-family="Liberation Sans" fill="#e0e0e0">15</text><line x1="901.6" y1="266.4" x2="1064.7" y2="266.4" stroke="#9a9a9a" stroke-width="1.6"/><line x1="894.6" y1="266.4" x2="901.6" y2="266.4" stroke="#a0a0a0" stroke-width="1.6"/><text x="895.1" y="272.4" font-size="16.5" text-anchor="end" font-family="Liberation Sans" fill="#e0e0e0">10</text><line x1="901.6" y1="325.7" x2="1064.7" y2="325.7" stroke="#9a9a9a" stroke-width="1.6"/><line x1="894.6" y1="325.7" x2="901.6" y2="325.7" stroke="#a0a0a0" stroke-width="1.6"/><text x="895.1" y="331.7" font-size="16.5" text-anchor="end" font-family="Liberation Sans" fill="#e0e0e0">5</text><line x1="901.6" y1="385.0" x2="1064.7" y2="385.0" stroke="#9a9a9a" stroke-width="1.6"/><line x1="894.6" y1="385.0" x2="901.6" y2="385.0" stroke="#a0a0a0" stroke-width="1.6"/><text x="895.1" y="391.0" font-size="16.5" text-anchor="end" font-family="Liberation Sans" fill="#e0e0e0">0</text><line x1="901.6" y1="444.3" x2="1064.7" y2="444.3" stroke="#9a9a9a" stroke-width="1.6"/><line x1="894.6" y1="444.3" x2="901.6" y2="444.3" stroke="#a0a0a0" stroke-width="1.6"/><text x="895.1" y="450.3" font-size="16.5" text-anchor="end" font-family="Liberation Sans" fill="#e0e0e0">-5</text><line x1="901.6" y1="503.6" x2="1064.7" y2="503.6" stroke="#9a9a9a" stroke-width="1.6"/><line x1="894.6" y1="503.6" x2="901.6" y2="503.6" stroke="#a0a0a0" stroke-width="1.6"/><text x="895.1" y="509.6" font-size="16.5" text-anchor="end" font-family="Liberation Sans" fill="#e0e0e0">-10</text><line x1="894.6" y1="562.8" x2="901.6" y2="562.8" stroke="#a0a0a0" stroke-width="1.6"/><text x="895.1" y="568.8" font-size="16.5" text-anchor="end" font-family="Liberation Sans" fill="#e0e0e0">-15</text><line x1="901.6" y1="562.3" x2="901.6" y2="569.3" stroke="#a0a0a0" stroke-width="1.6"/><line x1="1064.7" y1="562.3" x2="1064.7" y2="569.3" stroke="#a0a0a0" stroke-width="1.6"/><text x="967.5" y="201" font-size="16.5" text-anchor="middle" letter-spacing="0.3" font-family="Liberation Sans" fill="#e0e0e0">DeltaH</text><text x="983.2" y="580.5" font-size="15.5" text-anchor="middle" font-family="Liberation Sans" fill="#e0e0e0">100%</text><rect x="919" y="385" width="128.8" height="61.0" fill="url(#gy)" stroke="#000" stroke-width="1.6"/><rect x="396.8" y="841" width="285.6" height="203.5" fill="#242424" stroke="#a0a0a0" stroke-width="2"/><line x1="390.8" y1="841.0" x2="396.8" y2="841.0" stroke="#a0a0a0" stroke-width="1.6"/><text x="391.8" y="847.0" font-size="17" letter-spacing="-0.3" text-anchor="end" font-family="Liberation Sans" fill="#e0e0e0">20</text><line x1="396.8" y1="891.9" x2="682.4" y2="891.9" stroke="#9a9a9a" stroke-width="1.6"/><line x1="390.8" y1="891.9" x2="396.8" y2="891.9" stroke="#a0a0a0" stroke-width="1.6"/><text x="391.8" y="897.9" font-size="17" letter-spacing="-0.3" text-anchor="end" font-family="Liberation Sans" fill="#e0e0e0">10</text><line x1="396.8" y1="942.8" x2="682.4" y2="942.8" stroke="#9a9a9a" stroke-width="1.6"/><line x1="390.8" y1="942.8" x2="396.8" y2="942.8" stroke="#a0a0a0" stroke-width="1.6"/><text x="391.8" y="948.8" font-size="17" letter-spacing="-0.3" text-anchor="end" font-family="Liberation Sans" fill="#e0e0e0">0</text><line x1="396.8" y1="993.6" x2="682.4" y2="993.6" stroke="#9a9a9a" stroke-width="1.6"/><line x1="390.8" y1="993.6" x2="396.8" y2="993.6" stroke="#a0a0a0" stroke-width="1.6"/><text x="391.8" y="999.6" font-size="17" letter-spacing="-0.3" text-anchor="end" font-family="Liberation Sans" fill="#e0e0e0">-10</text><line x1="390.8" y1="1044.5" x2="396.8" y2="1044.5" stroke="#a0a0a0" stroke-width="1.6"/><text x="391.8" y="1050.5" font-size="17" letter-spacing="-0.3" text-anchor="end" font-family="Liberation Sans" fill="#e0e0e0">-20</text><line x1="396.8" y1="1044.5" x2="396.8" y2="1051.5" stroke="#a0a0a0" stroke-width="1.6"/><line x1="682.4" y1="1044.5" x2="682.4" y2="1051.5" stroke="#a0a0a0" stroke-width="1.6"/><text x="524.5" y="835.5" font-size="16" letter-spacing="-0.2" text-anchor="middle" font-family="Liberation Sans" fill="#e0e0e0">RGB Balance</text><text x="539.5" y="1062" font-size="15.5" text-anchor="middle" font-family="Liberation Sans" fill="#e0e0e0">100%</text><rect x="426.3" y="943" width="75" height="4.4" fill="url(#gr)" stroke="#000" stroke-width="1.5"/><rect x="502.8" y="943" width="74.7" height="66" fill="url(#gg)" stroke="#000" stroke-width="1.6"/><rect x="579" y="943" width="75.3" height="71.6" fill="url(#gb)" stroke="#000" stroke-width="1.6"/></svg>
<div class="a" style="left:1094px;top:171px;width:780px;height:626px;border:8px solid #ffff00;background:#333"></div>
<svg class="a" style="left:0;top:0" width="1875" height="1200"><rect x="1134.8" y="204.5" width="727.7" height="553" fill="#242424" stroke="#a0a0a0" stroke-width="2"/><line x1="1134.8" y1="758" x2="1134.8" y2="765" stroke="#c0c0c0" stroke-width="1.6"/><text x="1134.8" y="782" font-size="16" text-anchor="middle" font-family="Liberation Sans" fill="#e0e0e0">0</text><line x1="1127.5" y1="757.0" x2="1134" y2="757.0" stroke="#c0c0c0" stroke-width="1.6"/><text x="1128" y="762.5" font-size="16" text-anchor="end" font-family="Liberation Sans" fill="#e0e0e0">0</text><line x1="1221.3" y1="758" x2="1221.3" y2="765" stroke="#c0c0c0" stroke-width="1.6"/><text x="1221.3" y="782" font-size="16" text-anchor="middle" font-family="Liberation Sans" fill="#e0e0e0">0,1</text><line x1="1127.5" y1="691.4" x2="1134" y2="691.4" stroke="#c0c0c0" stroke-width="1.6"/><text x="1128" y="696.9" font-size="16" text-anchor="end" font-family="Liberation Sans" fill="#e0e0e0">0,1</text><line x1="1307.8" y1="758" x2="1307.8" y2="765" stroke="#c0c0c0" stroke-width="1.6"/><text x="1307.8" y="782" font-size="16" text-anchor="middle" font-family="Liberation Sans" fill="#e0e0e0">0,2</text><line x1="1127.5" y1="625.8" x2="1134" y2="625.8" stroke="#c0c0c0" stroke-width="1.6"/><text x="1128" y="631.3" font-size="16" text-anchor="end" font-family="Liberation Sans" fill="#e0e0e0">0,2</text><line x1="1394.3" y1="758" x2="1394.3" y2="765" stroke="#c0c0c0" stroke-width="1.6"/><text x="1394.3" y="782" font-size="16" text-anchor="middle" font-family="Liberation Sans" fill="#e0e0e0">0,3</text><line x1="1127.5" y1="560.2" x2="1134" y2="560.2" stroke="#c0c0c0" stroke-width="1.6"/><text x="1128" y="565.7" font-size="16" text-anchor="end" font-family="Liberation Sans" fill="#e0e0e0">0,3</text><line x1="1480.8" y1="758" x2="1480.8" y2="765" stroke="#c0c0c0" stroke-width="1.6"/><text x="1480.8" y="782" font-size="16" text-anchor="middle" font-family="Liberation Sans" fill="#e0e0e0">0,4</text><line x1="1127.5" y1="494.6" x2="1134" y2="494.6" stroke="#c0c0c0" stroke-width="1.6"/><text x="1128" y="500.1" font-size="16" text-anchor="end" font-family="Liberation Sans" fill="#e0e0e0">0,4</text><line x1="1567.3" y1="758" x2="1567.3" y2="765" stroke="#c0c0c0" stroke-width="1.6"/><text x="1567.3" y="782" font-size="16" text-anchor="middle" font-family="Liberation Sans" fill="#e0e0e0">0,5</text><line x1="1127.5" y1="429.0" x2="1134" y2="429.0" stroke="#c0c0c0" stroke-width="1.6"/><text x="1128" y="434.5" font-size="16" text-anchor="end" font-family="Liberation Sans" fill="#e0e0e0">0,5</text><line x1="1653.8" y1="758" x2="1653.8" y2="765" stroke="#c0c0c0" stroke-width="1.6"/><text x="1653.8" y="782" font-size="16" text-anchor="middle" font-family="Liberation Sans" fill="#e0e0e0">0,6</text><line x1="1127.5" y1="363.4" x2="1134" y2="363.4" stroke="#c0c0c0" stroke-width="1.6"/><text x="1128" y="368.9" font-size="16" text-anchor="end" font-family="Liberation Sans" fill="#e0e0e0">0,6</text><line x1="1740.3" y1="758" x2="1740.3" y2="765" stroke="#c0c0c0" stroke-width="1.6"/><text x="1740.3" y="782" font-size="16" text-anchor="middle" font-family="Liberation Sans" fill="#e0e0e0">0,7</text><line x1="1127.5" y1="297.8" x2="1134" y2="297.8" stroke="#c0c0c0" stroke-width="1.6"/><text x="1128" y="303.3" font-size="16" text-anchor="end" font-family="Liberation Sans" fill="#e0e0e0">0,7</text><line x1="1826.8" y1="758" x2="1826.8" y2="765" stroke="#c0c0c0" stroke-width="1.6"/><text x="1826.8" y="782" font-size="16" text-anchor="middle" font-family="Liberation Sans" fill="#e0e0e0">0,8</text><line x1="1127.5" y1="232.2" x2="1134" y2="232.2" stroke="#c0c0c0" stroke-width="1.6"/><text x="1128" y="237.7" font-size="16" text-anchor="end" font-family="Liberation Sans" fill="#e0e0e0">0,8</text><text x="1483.5" y="199" font-size="16" text-anchor="middle" font-family="Liberation Sans" fill="#e0e0e0">CIE 1931 xy</text></svg>
<svg class="a" style="left:0;top:0" width="1875" height="1200"><defs><clipPath id="lc"><path d="M1285.4 753.7C1285.4 753.7 1285.3 753.8 1285.1 753.8C1285.0 753.8 1284.9 753.8 1284.7 753.8C1284.5 753.9 1284.4 753.9 1284.1 753.8C1283.8 753.8 1283.4 753.8 1283.1 753.6C1282.7 753.5 1282.5 753.4 1282.1 753.2C1281.7 753.0 1281.4 752.8 1280.9 752.5C1280.4 752.2 1279.8 751.8 1279.2 751.3C1278.5 750.9 1277.8 750.4 1277.0 749.8C1276.2 749.3 1275.3 748.7 1274.2 747.9C1273.0 747.2 1271.7 746.3 1270.3 745.4C1268.8 744.4 1267.2 743.4 1265.4 742.1C1263.6 740.7 1261.6 739.3 1259.4 737.5C1257.1 735.6 1254.9 733.8 1252.0 730.7C1249.1 727.7 1245.9 724.1 1242.1 719.0C1238.4 713.8 1234.3 708.1 1229.6 699.9C1224.9 691.7 1219.7 682.2 1213.8 669.7C1207.9 657.2 1200.8 642.7 1194.2 624.9C1187.6 607.1 1180.6 586.1 1174.1 562.9C1167.6 539.6 1160.5 512.1 1155.1 485.4C1149.8 458.8 1144.7 429.3 1141.9 402.7C1139.1 376.2 1137.4 349.4 1138.2 326.1C1139.0 302.9 1141.8 280.6 1146.8 263.4C1151.9 246.1 1159.7 231.9 1168.4 222.7C1177.2 213.5 1188.2 209.9 1199.1 208.4C1209.9 206.8 1222.0 210.3 1233.6 213.4C1245.2 216.4 1257.3 221.8 1268.6 226.7C1280.0 231.6 1290.9 237.0 1301.7 242.7C1312.5 248.4 1322.9 254.4 1333.4 260.7C1343.9 267.0 1354.3 273.6 1364.7 280.4C1375.1 287.2 1385.4 294.3 1395.7 301.5C1406.0 308.6 1416.3 316.0 1426.6 323.4C1436.9 330.9 1447.2 338.5 1457.5 346.1C1467.8 353.7 1478.1 361.4 1488.3 369.0C1498.6 376.7 1508.8 384.4 1518.9 392.0C1529.1 399.6 1539.1 407.2 1549.0 414.7C1558.8 422.2 1568.6 429.6 1578.1 436.8C1587.6 444.0 1597.0 451.2 1606.1 458.0C1615.1 464.8 1624.0 471.5 1632.3 477.9C1640.7 484.2 1648.8 490.4 1656.3 496.1C1663.8 501.8 1670.6 506.9 1677.2 511.9C1683.7 516.8 1689.9 521.6 1695.5 525.8C1701.1 530.0 1706.1 533.8 1710.7 537.2C1715.3 540.7 1719.4 543.8 1723.1 546.6C1726.8 549.5 1730.0 551.9 1732.9 554.1C1735.9 556.4 1738.5 558.3 1740.8 560.1C1743.2 561.8 1745.2 563.4 1747.1 564.9C1749.1 566.3 1750.8 567.7 1752.4 568.9C1754.0 570.1 1755.4 571.2 1756.7 572.2C1758.0 573.1 1759.2 574.0 1760.2 574.7C1761.2 575.5 1762.0 576.1 1762.8 576.7C1763.6 577.3 1764.2 577.8 1764.8 578.2C1765.4 578.7 1765.7 578.9 1766.2 579.3C1766.8 579.7 1767.3 580.1 1768.0 580.7C1768.7 581.2 1769.9 582.1 1770.3 582.4Z"/></clipPath></defs><g clip-path="url(#lc)"><rect x="1135" y="205" width="324" height="12" fill="#009000"/><rect x="1459" y="205" width="24" height="12" fill="#089000"/><rect x="1483" y="205" width="12" height="12" fill="#109000"/><rect x="1495" y="205" width="12" height="12" fill="#189000"/><rect x="1507" y="205" width="12" height="12" fill="#209000"/><rect x="1519" y="205" width="12" height="12" fill="#289000"/><rect x="1531" y="205" width="12" height="12" fill="#309000"/><rect x="1543" y="205" width="12" height="12" fill="#389000"/><rect x="1555" y="205" width="12" height="12" fill="#409000"/><rect x="1567" y="205" width="12" height="12" fill="#489000"/><rect x="1579" y="205" width="12" height="12" fill="#509000"/><rect x="1591" y="205" width="12" height="12" fill="#589000"/><rect x="1603" y="205" width="12" height="12" fill="#609000"/><rect x="1615" y="205" width="12" height="12" fill="#689000"/><rect x="1627" y="205" width="12" height="12" fill="#709000"/><rect x="1639" y="205" width="12" height="12" fill="#809000"/><rect x="1651" y="205" width="12" height="12" fill="#889000"/><rect x="1663" y="205" width="12" height="12" fill="#909000"/><rect x="1675" y="205" width="12" height="12" fill="#908800"/><rect x="1687" y="205" width="12" height="12" fill="#908000"/><rect x="1699" y="205" width="12" height="12" fill="#907800"/><rect x="1711" y="205" width="12" height="12" fill="#907000"/><rect x="1723" y="205" width="12" height="12" fill="#906800"/><rect x="1735" y="205" width="24" height="12" fill="#906000"/><rect x="1759" y="205" width="12" height="12" fill="#905800"/><rect x="1771" y="205" width="24" height="12" fill="#905000"/><rect x="1795" y="205" width="24" height="12" fill="#904800"/><rect x="1819" y="205" width="24" height="12" fill="#904000"/><rect x="1843" y="205" width="24" height="12" fill="#903800"/><rect x="1135" y="217" width="324" height="12" fill="#009000"/><rect x="1459" y="217" width="12" height="12" fill="#089000"/><rect x="1471" y="217" width="12" height="12" fill="#109000"/><rect x="1483" y="217" width="12" height="12" fill="#189000"/><rect x="1495" y="217" width="24" height="12" fill="#209000"/><rect x="1519" y="217" width="12" height="12" fill="#289000"/><rect x="1531" y="217" width="12" height="12" fill="#309000"/><rect x="1543" y="217" width="12" height="12" fill="#389000"/><rect x="1555" y="217" width="12" height="12" fill="#409000"/><rect x="1567" y="217" width="12" height="12" fill="#509000"/><rect x="1579" y="217" width="12" height="12" fill="#589000"/><rect x="1591" y="217" width="12" height="12" fill="#609000"/><rect x="1603" y="217" width="12" height="12" fill="#689000"/><rect x="1615" y="217" width="12" height="12" fill="#709000"/><rect x="1627" y="217" width="12" height="12" fill="#789000"/><rect x="1639" y="217" width="12" height="12" fill="#889000"/><rect x="1651" y="217" width="12" height="12" fill="#909000"/><rect x="1663" y="217" width="12" height="12" fill="#908800"/><rect x="1675" y="217" width="12" height="12" fill="#908000"/><rect x="1687" y="217" width="12" height="12" fill="#907800"/><rect x="1699" y="217" width="12" height="12" fill="#907000"/><rect x="1711" y="217" width="12" height="12" fill="#906800"/><rect x="1723" y="217" width="24" height="12" fill="#906000"/><rect x="1747" y="217" width="12" height="12" fill="#905800"/><rect x="1759" y="217" width="24" height="12" fill="#905000"/><rect x="1783" y="217" width="24" height="12" fill="#904800"/><rect x="1807" y="217" width="24" height="12" fill="#904000"/><rect x="1831" y="217" width="36" height="12" fill="#903800"/><rect x="1135" y="229" width="324" height="12" fill="#009000"/><rect x="1459" y="229" width="12" height="12" fill="#089000"/><rect x="1471" y="229" width="12" height="12" fill="#109000"/><rect x="1483" y="229" width="12" height="12" fill="#189000"/><rect x="1495" y="229" width="12" height="12" fill="#209000"/><rect x="1507" y="229" width="12" height="12" fill="#289000"/><rect x="1519" y="229" width="12" height="12" fill="#309000"/><rect x="1531" y="229" width="12" height="12" fill="#389000"/><rect x="1543" y="229" width="12" height="12" fill="#409000"/><rect x="1555" y="229" width="12" height="12" fill="#489000"/><rect x="1567" y="229" width="12" height="12" fill="#509000"/><rect x="1579" y="229" width="12" height="12" fill="#589000"/><rect x="1591" y="229" width="12" height="12" fill="#689000"/><rect x="1603" y="229" width="12" height="12" fill="#709000"/><rect x="1615" y="229" width="12" height="12" fill="#789000"/><rect x="1627" y="229" width="12" height="12" fill="#809000"/><rect x="1639" y="229" width="12" height="12" fill="#909000"/><rect x="1651" y="229" width="12" height="12" fill="#908800"/><rect x="1663" y="229" width="12" height="12" fill="#908000"/><rect x="1675" y="229" width="12" height="12" fill="#907800"/><rect x="1687" y="229" width="12" height="12" fill="#907000"/><rect x="1699" y="229" width="12" height="12" fill="#906800"/><rect x="1711" y="229" width="24" height="12" fill="#906000"/><rect x="1735" y="229" width="12" height="12" fill="#905800"/><rect x="1747" y="229" width="24" height="12" fill="#905000"/><rect x="1771" y="229" width="24" height="12" fill="#904800"/><rect x="1795" y="229" width="24" height="12" fill="#904000"/><rect x="1819" y="229" width="36" height="12" fill="#903800"/><rect x="1855" y="229" width="12" height="12" fill="#903000"/><rect x="1135" y="241" width="312" height="12" fill="#009000"/><rect x="1447" y="241" width="12" height="12" fill="#089000"/><rect x="1459" y="241" width="12" height="12" fill="#109000"/><rect x="1471" y="241" width="12" height="12" fill="#189000"/><rect x="1483" y="241" width="24" height="12" fill="#209000"/><rect x="1507" y="241" width="12" height="12" fill="#289000"/><rect x="1519" y="241" width="12" height="12" fill="#389000"/><rect x="1531" y="241" width="12" height="12" fill="#409000"/><rect x="1543" y="241" width="12" height="12" fill="#489000"/><rect x="1555" y="241" width="12" height="12" fill="#509000"/><rect x="1567" y="241" width="12" height="12" fill="#589000"/><rect x="1579" y="241" width="12" height="12" fill="#609000"/><rect x="1591" y="241" width="12" height="12" fill="#689000"/><rect x="1603" y="241" width="12" height="12" fill="#789000"/><rect x="1615" y="241" width="12" height="12" fill="#809000"/><rect x="1627" y="241" width="12" height="12" fill="#889000"/><rect x="1639" y="241" width="12" height="12" fill="#908800"/><rect x="1651" y="241" width="12" height="12" fill="#908000"/><rect x="1663" y="241" width="12" height="12" fill="#907800"/><rect x="1675" y="241" width="12" height="12" fill="#907000"/><rect x="1687" y="241" width="12" height="12" fill="#906800"/><rect x="1699" y="241" width="24" height="12" fill="#906000"/><rect x="1723" y="241" width="12" height="12" fill="#905800"/><rect x="1735" y="241" width="24" height="12" fill="#905000"/><rect x="1759" y="241" width="24" height="12" fill="#904800"/><rect x="1783" y="241" width="24" height="12" fill="#904000"/><rect x="1807" y="241" width="24" height="12" fill="#903800"/><rect x="1831" y="241" width="36" height="12" fill="#903000"/><rect x="1135" y="253" width="24" height="12" fill="#009008"/><rect x="1159" y="253" width="288" height="12" fill="#009000"/><rect x="1447" y="253" width="12" height="12" fill="#089000"/><rect x="1459" y="253" width="12" height="12" fill="#109000"/><rect x="1471" y="253" width="12" height="12" fill="#189000"/><rect x="1483" y="253" width="12" height="12" fill="#209000"/><rect x="1495" y="253" width="12" height="12" fill="#289000"/><rect x="1507" y="253" width="12" height="12" fill="#309000"/><rect x="1519" y="253" width="12" height="12" fill="#389000"/><rect x="1531" y="253" width="12" height="12" fill="#409000"/><rect x="1543" y="253" width="12" height="12" fill="#489000"/><rect x="1555" y="253" width="12" height="12" fill="#589000"/><rect x="1567" y="253" width="12" height="12" fill="#609000"/><rect x="1579" y="253" width="12" height="12" fill="#689000"/><rect x="1591" y="253" width="12" height="12" fill="#709000"/><rect x="1603" y="253" width="12" height="12" fill="#809000"/><rect x="1615" y="253" width="12" height="12" fill="#889000"/><rect x="1627" y="253" width="12" height="12" fill="#909000"/><rect x="1639" y="253" width="12" height="12" fill="#908000"/><rect x="1651" y="253" width="12" height="12" fill="#907800"/><rect x="1663" y="253" width="12" height="12" fill="#907000"/><rect x="1675" y="253" width="12" height="12" fill="#906800"/><rect x="1687" y="253" width="24" height="12" fill="#906000"/><rect x="1711" y="253" width="12" height="12" fill="#905800"/><rect x="1723" y="253" width="24" height="12" fill="#905000"/><rect x="1747" y="253" width="24" height="12" fill="#904800"/><rect x="1771" y="253" width="24" height="12" fill="#904000"/><rect x="1795" y="253" width="24" height="12" fill="#903800"/><rect x="1819" y="253" width="36" height="12" fill="#903000"/><rect x="1855" y="253" width="12" height="12" fill="#902800"/><rect x="1135" y="265" width="48" height="12" fill="#009008"/><rect x="1183" y="265" width="252" height="12" fill="#009000"/><rect x="1435" y="265" width="24" height="12" fill="#089000"/><rect x="1459" y="265" width="12" height="12" fill="#109000"/><rect x="1471" y="265" width="12" height="12" fill="#189000"/><rect x="1483" y="265" width="12" height="12" fill="#209000"/><rect x="1495" y="265" width="12" height="12" fill="#309000"/><rect x="1507" y="265" width="12" height="12" fill="#389000"/><rect x="1519" y="265" width="12" height="12" fill="#409000"/><rect x="1531" y="265" width="12" height="12" fill="#489000"/><rect x="1543" y="265" width="12" height="12" fill="#509000"/><rect x="1555" y="265" width="12" height="12" fill="#589000"/><rect x="1567" y="265" width="12" height="12" fill="#689000"/><rect x="1579" y="265" width="12" height="12" fill="#709000"/><rect x="1591" y="265" width="12" height="12" fill="#789000"/><rect x="1603" y="265" width="12" height="12" fill="#889000"/><rect x="1615" y="265" width="12" height="12" fill="#909000"/><rect x="1627" y="265" width="12" height="12" fill="#908800"/><rect x="1639" y="265" width="12" height="12" fill="#907800"/><rect x="1651" y="265" width="12" height="12" fill="#907000"/><rect x="1663" y="265" width="12" height="12" fill="#906800"/><rect x="1675" y="265" width="24" height="12" fill="#906000"/><rect x="1699" y="265" width="12" height="12" fill="#905800"/><rect x="1711" y="265" width="24" height="12" fill="#905000"/><rect x="1735" y="265" width="12" height="12" fill="#904800"/><rect x="1747" y="265" width="36" height="12" fill="#904000"/><rect x="1783" y="265" width="24" height="12" fill="#903800"/><rect x="1807" y="265" width="36" height="12" fill="#903000"/><rect x="1843" y="265" width="24" height="12" fill="#902800"/><rect x="1135" y="277" width="72" height="12" fill="#009008"/><rect x="1207" y="277" width="228" height="12" fill="#009000"/><rect x="1435" y="277" width="12" height="12" fill="#089000"/><rect x="1447" y="277" width="12" height="12" fill="#109000"/><rect x="1459" y="277" width="12" height="12" fill="#189000"/><rect x="1471" y="277" width="12" height="12" fill="#209000"/><rect x="1483" y="277" width="12" height="12" fill="#289000"/><rect x="1495" y="277" width="12" height="12" fill="#309000"/><rect x="1507" y="277" width="12" height="12" fill="#389000"/><rect x="1519" y="277" width="12" height="12" fill="#409000"/><rect x="1531" y="277" width="12" height="12" fill="#509000"/><rect x="1543" y="277" width="12" height="12" fill="#589000"/><rect x="1555" y="277" width="12" height="12" fill="#609000"/><rect x="1567" y="277" width="12" height="12" fill="#709000"/><rect x="1579" y="277" width="12" height="12" fill="#789000"/><rect x="1591" y="277" width="12" height="12" fill="#809000"/><rect x="1603" y="277" width="12" height="12" fill="#909000"/><rect x="1615" y="277" width="12" height="12" fill="#908800"/><rect x="1627" y="277" width="12" height="12" fill="#908000"/><rect x="1639" y="277" width="12" height="12" fill="#907000"/><rect x="1651" y="277" width="24" height="12" fill="#906800"/><rect x="1675" y="277" width="12" height="12" fill="#906000"/><rect x="1687" y="277" width="12" height="12" fill="#905800"/><rect x="1699" y="277" width="24" height="12" fill="#905000"/><rect x="1723" y="277" width="12" height="12" fill="#904800"/><rect x="1735" y="277" width="24" height="12" fill="#904000"/><rect x="1759" y="277" width="36" height="12" fill="#903800"/><rect x="1795" y="277" width="36" height="12" fill="#903000"/><rect x="1831" y="277" width="36" height="12" fill="#902800"/><rect x="1135" y="289" width="24" height="12" fill="#009010"/><rect x="1159" y="289" width="72" height="12" fill="#009008"/><rect x="1231" y="289" width="204" height="12" fill="#009000"/><rect x="1435" y="289" width="12" height="12" fill="#089000"/><rect x="1447" y="289" width="12" height="12" fill="#109000"/><rect x="1459" y="289" width="12" height="12" fill="#189000"/><rect x="1471" y="289" width="12" height="12" fill="#209000"/><rect x="1483" y="289" width="12" height="12" fill="#309000"/><rect x="1495" y="289" width="12" height="12" fill="#389000"/><rect x="1507" y="289" width="12" height="12" fill="#409000"/><rect x="1519" y="289" width="12" height="12" fill="#489000"/><rect x="1531" y="289" width="12" height="12" fill="#509000"/><rect x="1543" y="289" width="12" height="12" fill="#609000"/><rect x="1555" y="289" width="12" height="12" fill="#689000"/><rect x="1567" y="289" width="12" height="12" fill="#789000"/><rect x="1579" y="289" width="12" height="12" fill="#809000"/><rect x="1591" y="289" width="12" height="12" fill="#889000"/><rect x="1603" y="289" width="12" height="12" fill="#908800"/><rect x="1615" y="289" width="12" height="12" fill="#908000"/><rect x="1627" y="289" width="12" height="12" fill="#907800"/><rect x="1639" y="289" width="12" height="12" fill="#907000"/><rect x="1651" y="289" width="12" height="12" fill="#906800"/><rect x="1663" y="289" width="12" height="12" fill="#906000"/><rect x="1675" y="289" width="12" height="12" fill="#905800"/><rect x="1687" y="289" width="24" height="12" fill="#905000"/><rect x="1711" y="289" width="12" height="12" fill="#904800"/><rect x="1723" y="289" width="24" height="12" fill="#904000"/><rect x="1747" y="289" width="36" height="12" fill="#903800"/><rect x="1783" y="289" width="24" height="12" fill="#903000"/><rect x="1807" y="289" width="48" height="12" fill="#902800"/><rect x="1855" y="289" width="12" height="12" fill="#902000"/><rect x="1135" y="301" width="48" height="12" fill="#009010"/><rect x="1183" y="301" width="72" height="12" fill="#009008"/><rect x="1255" y="301" width="168" height="12" fill="#009000"/><rect x="1423" y="301" width="12" height="12" fill="#089000"/><rect x="1435" y="301" width="12" height="12" fill="#109000"/><rect x="1447" y="301" width="12" height="12" fill="#189000"/><rect x="1459" y="301" width="12" height="12" fill="#209000"/><rect x="1471" y="301" width="12" height="12" fill="#289000"/><rect x="1483" y="301" width="12" height="12" fill="#309000"/><rect x="1495" y="301" width="12" height="12" fill="#389000"/><rect x="1507" y="301" width="12" height="12" fill="#489000"/><rect x="1519" y="301" width="12" height="12" fill="#509000"/><rect x="1531" y="301" width="12" height="12" fill="#589000"/><rect x="1543" y="301" width="12" height="12" fill="#689000"/><rect x="1555" y="301" width="12" height="12" fill="#709000"/><rect x="1567" y="301" width="12" height="12" fill="#809000"/><rect x="1579" y="301" width="12" height="12" fill="#889000"/><rect x="1591" y="301" width="12" height="12" fill="#908800"/><rect x="1603" y="301" width="12" height="12" fill="#908000"/><rect x="1615" y="301" width="12" height="12" fill="#907800"/><rect x="1627" y="301" width="12" height="12" fill="#907000"/><rect x="1639" y="301" width="12" height="12" fill="#906800"/><rect x="1651" y="301" width="12" height="12" fill="#906000"/><rect x="1663" y="301" width="12" height="12" fill="#905800"/><rect x="1675" y="301" width="24" height="12" fill="#905000"/><rect x="1699" y="301" width="12" height="12" fill="#904800"/><rect x="1711" y="301" width="24" height="12" fill="#904000"/><rect x="1735" y="301" width="24" height="12" fill="#903800"/><rect x="1759" y="301" width="36" height="12" fill="#903000"/><rect x="1795" y="301" width="36" height="12" fill="#902800"/><rect x="1831" y="301" width="36" height="12" fill="#902000"/><rect x="1135" y="313" width="12" height="12" fill="#009018"/><rect x="1147" y="313" width="72" height="12" fill="#009010"/><rect x="1219" y="313" width="48" height="12" fill="#009008"/><rect x="1267" y="313" width="156" height="12" fill="#009000"/><rect x="1423" y="313" width="12" height="12" fill="#089000"/><rect x="1435" y="313" width="12" height="12" fill="#109000"/><rect x="1447" y="313" width="12" height="12" fill="#189000"/><rect x="1459" y="313" width="12" height="12" fill="#289000"/><rect x="1471" y="313" width="12" height="12" fill="#309000"/><rect x="1483" y="313" width="12" height="12" fill="#389000"/><rect x="1495" y="313" width="12" height="12" fill="#409000"/><rect x="1507" y="313" width="12" height="12" fill="#489000"/><rect x="1519" y="313" width="12" height="12" fill="#589000"/><rect x="1531" y="313" width="12" height="12" fill="#609000"/><rect x="1543" y="313" width="12" height="12" fill="#709000"/><rect x="1555" y="313" width="12" height="12" fill="#789000"/><rect x="1567" y="313" width="12" height="12" fill="#889000"/><rect x="1579" y="313" width="12" height="12" fill="#909000"/><rect x="1591" y="313" width="12" height="12" fill="#908000"/><rect x="1603" y="313" width="12" height="12" fill="#907800"/><rect x="1615" y="313" width="12" height="12" fill="#907000"/><rect x="1627" y="313" width="12" height="12" fill="#906800"/><rect x="1639" y="313" width="12" height="12" fill="#906000"/><rect x="1651" y="313" width="12" height="12" fill="#905800"/><rect x="1663" y="313" width="12" height="12" fill="#905000"/><rect x="1675" y="313" width="24" height="12" fill="#904800"/><rect x="1699" y="313" width="24" height="12" fill="#904000"/><rect x="1723" y="313" width="24" height="12" fill="#903800"/><rect x="1747" y="313" width="36" height="12" fill="#903000"/><rect x="1783" y="313" width="36" height="12" fill="#902800"/><rect x="1819" y="313" width="48" height="12" fill="#902000"/><rect x="1135" y="325" width="48" height="12" fill="#009018"/><rect x="1183" y="325" width="60" height="12" fill="#009010"/><rect x="1243" y="325" width="48" height="12" fill="#009008"/><rect x="1291" y="325" width="120" height="12" fill="#009000"/><rect x="1411" y="325" width="12" height="12" fill="#089000"/><rect x="1423" y="325" width="12" height="12" fill="#109000"/><rect x="1435" y="325" width="12" height="12" fill="#189000"/><rect x="1447" y="325" width="12" height="12" fill="#209000"/><rect x="1459" y="325" width="12" height="12" fill="#289000"/><rect x="1471" y="325" width="12" height="12" fill="#309000"/><rect x="1483" y="325" width="12" height="12" fill="#409000"/><rect x="1495" y="325" width="12" height="12" fill="#489000"/><rect x="1507" y="325" width="12" height="12" fill="#509000"/><rect x="1519" y="325" width="12" height="12" fill="#609000"/><rect x="1531" y="325" width="12" height="12" fill="#689000"/><rect x="1543" y="325" width="12" height="12" fill="#789000"/><rect x="1555" y="325" width="12" height="12" fill="#809000"/><rect x="1567" y="325" width="12" height="12" fill="#909000"/><rect x="1579" y="325" width="12" height="12" fill="#908000"/><rect x="1591" y="325" width="12" height="12" fill="#907800"/><rect x="1603" y="325" width="12" height="12" fill="#907000"/><rect x="1615" y="325" width="12" height="12" fill="#906800"/><rect x="1627" y="325" width="12" height="12" fill="#906000"/><rect x="1639" y="325" width="12" height="12" fill="#905800"/><rect x="1651" y="325" width="12" height="12" fill="#905000"/><rect x="1663" y="325" width="24" height="12" fill="#904800"/><rect x="1687" y="325" width="24" height="12" fill="#904000"/><rect x="1711" y="325" width="24" height="12" fill="#903800"/><rect x="1735" y="325" width="24" height="12" fill="#903000"/><rect x="1759" y="325" width="36" height="12" fill="#902800"/><rect x="1795" y="325" width="48" height="12" fill="#902000"/><rect x="1843" y="325" width="24" height="12" fill="#901800"/><rect x="1135" y="337" width="12" height="12" fill="#009020"/><rect x="1147" y="337" width="60" height="12" fill="#009018"/><rect x="1207" y="337" width="60" height="12" fill="#009010"/><rect x="1267" y="337" width="48" height="12" fill="#009008"/><rect x="1315" y="337" width="96" height="12" fill="#009000"/><rect x="1411" y="337" width="12" height="12" fill="#089000"/><rect x="1423" y="337" width="12" height="12" fill="#109000"/><rect x="1435" y="337" width="12" height="12" fill="#189000"/><rect x="1447" y="337" width="12" height="12" fill="#289000"/><rect x="1459" y="337" width="12" height="12" fill="#309000"/><rect x="1471" y="337" width="12" height="12" fill="#389000"/><rect x="1483" y="337" width="12" height="12" fill="#409000"/><rect x="1495" y="337" width="12" height="12" fill="#509000"/><rect x="1507" y="337" width="12" height="12" fill="#589000"/><rect x="1519" y="337" width="12" height="12" fill="#689000"/><rect x="1531" y="337" width="12" height="12" fill="#709000"/><rect x="1543" y="337" width="12" height="12" fill="#809000"/><rect x="1555" y="337" width="12" height="12" fill="#909000"/><rect x="1567" y="337" width="12" height="12" fill="#908800"/><rect x="1579" y="337" width="12" height="12" fill="#907800"/><rect x="1591" y="337" width="12" height="12" fill="#907000"/><rect x="1603" y="337" width="12" height="12" fill="#906800"/><rect x="1615" y="337" width="12" height="12" fill="#906000"/><rect x="1627" y="337" width="12" height="12" fill="#905800"/><rect x="1639" y="337" width="12" height="12" fill="#905000"/><rect x="1651" y="337" width="24" height="12" fill="#904800"/><rect x="1675" y="337" width="24" height="12" fill="#904000"/><rect x="1699" y="337" width="24" height="12" fill="#903800"/><rect x="1723" y="337" width="24" height="12" fill="#903000"/><rect x="1747" y="337" width="36" height="12" fill="#902800"/><rect x="1783" y="337" width="48" height="12" fill="#902000"/><rect x="1831" y="337" width="36" height="12" fill="#901800"/><rect x="1135" y="349" width="36" height="12" fill="#009020"/><rect x="1171" y="349" width="60" height="12" fill="#009018"/><rect x="1231" y="349" width="60" height="12" fill="#009010"/><rect x="1291" y="349" width="48" height="12" fill="#009008"/><rect x="1339" y="349" width="72" height="12" fill="#009000"/><rect x="1411" y="349" width="12" height="12" fill="#089000"/><rect x="1423" y="349" width="12" height="12" fill="#189000"/><rect x="1435" y="349" width="12" height="12" fill="#209000"/><rect x="1447" y="349" width="12" height="12" fill="#289000"/><rect x="1459" y="349" width="12" height="12" fill="#309000"/><rect x="1471" y="349" width="12" height="12" fill="#409000"/><rect x="1483" y="349" width="12" height="12" fill="#489000"/><rect x="1495" y="349" width="12" height="12" fill="#589000"/><rect x="1507" y="349" width="12" height="12" fill="#609000"/><rect x="1519" y="349" width="12" height="12" fill="#709000"/><rect x="1531" y="349" width="12" height="12" fill="#809000"/><rect x="1543" y="349" width="12" height="12" fill="#889000"/><rect x="1555" y="349" width="12" height="12" fill="#908800"/><rect x="1567" y="349" width="12" height="12" fill="#907800"/><rect x="1579" y="349" width="12" height="12" fill="#907000"/><rect x="1591" y="349" width="12" height="12" fill="#906800"/><rect x="1603" y="349" width="12" height="12" fill="#906000"/><rect x="1615" y="349" width="12" height="12" fill="#905800"/><rect x="1627" y="349" width="12" height="12" fill="#905000"/><rect x="1639" y="349" width="24" height="12" fill="#904800"/><rect x="1663" y="349" width="24" height="12" fill="#904000"/><rect x="1687" y="349" width="24" height="12" fill="#903800"/><rect x="1711" y="349" width="24" height="12" fill="#903000"/><rect x="1735" y="349" width="36" height="12" fill="#902800"/><rect x="1771" y="349" width="36" height="12" fill="#902000"/><rect x="1807" y="349" width="48" height="12" fill="#901800"/><rect x="1855" y="349" width="12" height="12" fill="#901000"/><rect x="1135" y="361" width="72" height="12" fill="#009020"/><rect x="1207" y="361" width="60" height="12" fill="#009018"/><rect x="1267" y="361" width="48" height="12" fill="#009010"/><rect x="1315" y="361" width="48" height="12" fill="#009008"/><rect x="1363" y="361" width="24" height="12" fill="#009000"/><rect x="1387" y="361" width="12" height="12" fill="#00f800"/><rect x="1399" y="361" width="12" height="12" fill="#089000"/><rect x="1411" y="361" width="12" height="12" fill="#109000"/><rect x="1423" y="361" width="12" height="12" fill="#189000"/><rect x="1435" y="361" width="12" height="12" fill="#289000"/><rect x="1447" y="361" width="12" height="12" fill="#309000"/><rect x="1459" y="361" width="12" height="12" fill="#389000"/><rect x="1471" y="361" width="12" height="12" fill="#489000"/><rect x="1483" y="361" width="12" height="12" fill="#509000"/><rect x="1495" y="361" width="12" height="12" fill="#609000"/><rect x="1507" y="361" width="12" height="12" fill="#689000"/><rect x="1519" y="361" width="12" height="12" fill="#789000"/><rect x="1531" y="361" width="12" height="12" fill="#889000"/><rect x="1543" y="361" width="12" height="12" fill="#908800"/><rect x="1555" y="361" width="12" height="12" fill="#908000"/><rect x="1567" y="361" width="12" height="12" fill="#907000"/><rect x="1579" y="361" width="12" height="12" fill="#906800"/><rect x="1591" y="361" width="12" height="12" fill="#906000"/><rect x="1603" y="361" width="12" height="12" fill="#905800"/><rect x="1615" y="361" width="12" height="12" fill="#905000"/><rect x="1627" y="361" width="24" height="12" fill="#904800"/><rect x="1651" y="361" width="12" height="12" fill="#904000"/><rect x="1663" y="361" width="24" height="12" fill="#903800"/><rect x="1687" y="361" width="36" height="12" fill="#903000"/><rect x="1723" y="361" width="24" height="12" fill="#902800"/><rect x="1747" y="361" width="48" height="12" fill="#902000"/><rect x="1795" y="361" width="48" height="12" fill="#901800"/><rect x="1843" y="361" width="24" height="12" fill="#901000"/><rect x="1135" y="373" width="48" height="12" fill="#009028"/><rect x="1183" y="373" width="60" height="12" fill="#009020"/><rect x="1243" y="373" width="48" height="12" fill="#009018"/><rect x="1291" y="373" width="48" height="12" fill="#009010"/><rect x="1339" y="373" width="48" height="12" fill="#009008"/><rect x="1387" y="373" width="12" height="12" fill="#00f808"/><rect x="1399" y="373" width="12" height="12" fill="#10f800"/><rect x="1411" y="373" width="12" height="12" fill="#28f800"/><rect x="1423" y="373" width="12" height="12" fill="#209000"/><rect x="1435" y="373" width="12" height="12" fill="#289000"/><rect x="1447" y="373" width="12" height="12" fill="#389000"/><rect x="1459" y="373" width="12" height="12" fill="#409000"/><rect x="1471" y="373" width="12" height="12" fill="#509000"/><rect x="1483" y="373" width="12" height="12" fill="#589000"/><rect x="1495" y="373" width="12" height="12" fill="#689000"/><rect x="1507" y="373" width="12" height="12" fill="#789000"/><rect x="1519" y="373" width="12" height="12" fill="#889000"/><rect x="1531" y="373" width="12" height="12" fill="#909000"/><rect x="1543" y="373" width="12" height="12" fill="#908000"/><rect x="1555" y="373" width="12" height="12" fill="#907000"/><rect x="1567" y="373" width="12" height="12" fill="#906800"/><rect x="1579" y="373" width="12" height="12" fill="#906000"/><rect x="1591" y="373" width="12" height="12" fill="#905800"/><rect x="1603" y="373" width="12" height="12" fill="#905000"/><rect x="1615" y="373" width="24" height="12" fill="#904800"/><rect x="1639" y="373" width="12" height="12" fill="#904000"/><rect x="1651" y="373" width="24" height="12" fill="#903800"/><rect x="1675" y="373" width="24" height="12" fill="#903000"/><rect x="1699" y="373" width="36" height="12" fill="#902800"/><rect x="1735" y="373" width="36" height="12" fill="#902000"/><rect x="1771" y="373" width="48" height="12" fill="#901800"/><rect x="1819" y="373" width="48" height="12" fill="#901000"/><rect x="1135" y="385" width="12" height="12" fill="#009030"/><rect x="1147" y="385" width="72" height="12" fill="#009028"/><rect x="1219" y="385" width="60" height="12" fill="#009020"/><rect x="1279" y="385" width="48" height="12" fill="#009018"/><rect x="1327" y="385" width="36" height="12" fill="#009010"/><rect x="1363" y="385" width="24" height="12" fill="#009008"/><rect x="1387" y="385" width="12" height="12" fill="#08f810"/><rect x="1399" y="385" width="12" height="12" fill="#18f808"/><rect x="1411" y="385" width="12" height="12" fill="#30f808"/><rect x="1423" y="385" width="12" height="12" fill="#40f800"/><rect x="1435" y="385" width="12" height="12" fill="#309000"/><rect x="1447" y="385" width="12" height="12" fill="#389000"/><rect x="1459" y="385" width="12" height="12" fill="#489000"/><rect x="1471" y="385" width="12" height="12" fill="#589000"/><rect x="1483" y="385" width="12" height="12" fill="#609000"/><rect x="1495" y="385" width="12" height="12" fill="#709000"/><rect x="1507" y="385" width="12" height="12" fill="#809000"/><rect x="1519" y="385" width="12" height="12" fill="#909000"/><rect x="1531" y="385" width="12" height="12" fill="#908000"/><rect x="1543" y="385" width="12" height="12" fill="#907800"/><rect x="1555" y="385" width="12" height="12" fill="#906800"/><rect x="1567" y="385" width="12" height="12" fill="#906000"/><rect x="1579" y="385" width="12" height="12" fill="#905800"/><rect x="1591" y="385" width="12" height="12" fill="#905000"/><rect x="1603" y="385" width="24" height="12" fill="#904800"/><rect x="1627" y="385" width="12" height="12" fill="#904000"/><rect x="1639" y="385" width="24" height="12" fill="#903800"/><rect x="1663" y="385" width="24" height="12" fill="#903000"/><rect x="1687" y="385" width="36" height="12" fill="#902800"/><rect x="1723" y="385" width="36" height="12" fill="#902000"/><rect x="1759" y="385" width="48" height="12" fill="#901800"/><rect x="1807" y="385" width="60" height="12" fill="#901000"/><rect x="1135" y="397" width="60" height="12" fill="#009030"/><rect x="1195" y="397" width="60" height="12" fill="#009028"/><rect x="1255" y="397" width="48" height="12" fill="#009020"/><rect x="1303" y="397" width="48" height="12" fill="#009018"/><rect x="1351" y="397" width="24" height="12" fill="#009010"/><rect x="1375" y="397" width="12" height="12" fill="#00f818"/><rect x="1387" y="397" width="12" height="12" fill="#10f818"/><rect x="1399" y="397" width="12" height="12" fill="#20f810"/><rect x="1411" y="397" width="12" height="12" fill="#38f810"/><rect x="1423" y="397" width="12" height="12" fill="#48f808"/><rect x="1435" y="397" width="12" height="12" fill="#60f808"/><rect x="1447" y="397" width="12" height="12" fill="#78f800"/><rect x="1459" y="397" width="12" height="12" fill="#509000"/><rect x="1471" y="397" width="12" height="12" fill="#609000"/><rect x="1483" y="397" width="12" height="12" fill="#709000"/><rect x="1495" y="397" width="12" height="12" fill="#809000"/><rect x="1507" y="397" width="12" height="12" fill="#909000"/><rect x="1519" y="397" width="12" height="12" fill="#908800"/><rect x="1531" y="397" width="12" height="12" fill="#907800"/><rect x="1543" y="397" width="12" height="12" fill="#906800"/><rect x="1555" y="397" width="12" height="12" fill="#906000"/><rect x="1567" y="397" width="12" height="12" fill="#905800"/><rect x="1579" y="397" width="12" height="12" fill="#905000"/><rect x="1591" y="397" width="12" height="12" fill="#904800"/><rect x="1603" y="397" width="24" height="12" fill="#904000"/><rect x="1627" y="397" width="24" height="12" fill="#903800"/><rect x="1651" y="397" width="24" height="12" fill="#903000"/><rect x="1675" y="397" width="24" height="12" fill="#902800"/><rect x="1699" y="397" width="36" height="12" fill="#902000"/><rect x="1735" y="397" width="48" height="12" fill="#901800"/><rect x="1783" y="397" width="60" height="12" fill="#901000"/><rect x="1843" y="397" width="24" height="12" fill="#900800"/><rect x="1135" y="409" width="36" height="12" fill="#009038"/><rect x="1171" y="409" width="60" height="12" fill="#009030"/><rect x="1231" y="409" width="60" height="12" fill="#009028"/><rect x="1291" y="409" width="48" height="12" fill="#009020"/><rect x="1339" y="409" width="36" height="12" fill="#009018"/><rect x="1375" y="409" width="12" height="12" fill="#08f828"/><rect x="1387" y="409" width="12" height="12" fill="#18f820"/><rect x="1399" y="409" width="12" height="12" fill="#30f820"/><rect x="1411" y="409" width="12" height="12" fill="#40f818"/><rect x="1423" y="409" width="12" height="12" fill="#58f810"/><rect x="1435" y="409" width="12" height="12" fill="#70f810"/><rect x="1447" y="409" width="12" height="12" fill="#88f808"/><rect x="1459" y="409" width="12" height="12" fill="#a0f800"/><rect x="1471" y="409" width="12" height="12" fill="#b8f800"/><rect x="1483" y="409" width="12" height="12" fill="#789000"/><rect x="1495" y="409" width="12" height="12" fill="#889000"/><rect x="1507" y="409" width="12" height="12" fill="#908800"/><rect x="1519" y="409" width="12" height="12" fill="#907800"/><rect x="1531" y="409" width="12" height="12" fill="#907000"/><rect x="1543" y="409" width="12" height="12" fill="#906000"/><rect x="1555" y="409" width="12" height="12" fill="#905800"/><rect x="1567" y="409" width="12" height="12" fill="#905000"/><rect x="1579" y="409" width="12" height="12" fill="#904800"/><rect x="1591" y="409" width="24" height="12" fill="#904000"/><rect x="1615" y="409" width="12" height="12" fill="#903800"/><rect x="1627" y="409" width="24" height="12" fill="#903000"/><rect x="1651" y="409" width="36" height="12" fill="#902800"/><rect x="1687" y="409" width="36" height="12" fill="#902000"/><rect x="1723" y="409" width="36" height="12" fill="#901800"/><rect x="1759" y="409" width="60" height="12" fill="#901000"/><rect x="1819" y="409" width="48" height="12" fill="#900800"/><rect x="1135" y="421" width="12" height="12" fill="#009040"/><rect x="1147" y="421" width="72" height="12" fill="#009038"/><rect x="1219" y="421" width="60" height="12" fill="#009030"/><rect x="1279" y="421" width="48" height="12" fill="#009028"/><rect x="1327" y="421" width="48" height="12" fill="#009020"/><rect x="1375" y="421" width="12" height="12" fill="#10f830"/><rect x="1387" y="421" width="12" height="12" fill="#20f830"/><rect x="1399" y="421" width="12" height="12" fill="#38f828"/><rect x="1411" y="421" width="12" height="12" fill="#50f820"/><rect x="1423" y="421" width="12" height="12" fill="#60f820"/><rect x="1435" y="421" width="12" height="12" fill="#78f818"/><rect x="1447" y="421" width="12" height="12" fill="#98f810"/><rect x="1459" y="421" width="12" height="12" fill="#b0f810"/><rect x="1471" y="421" width="12" height="12" fill="#c8f808"/><rect x="1483" y="421" width="12" height="12" fill="#e8f800"/><rect x="1495" y="421" width="12" height="12" fill="#908800"/><rect x="1507" y="421" width="12" height="12" fill="#907800"/><rect x="1519" y="421" width="12" height="12" fill="#907000"/><rect x="1531" y="421" width="12" height="12" fill="#906000"/><rect x="1543" y="421" width="12" height="12" fill="#905800"/><rect x="1555" y="421" width="12" height="12" fill="#905000"/><rect x="1567" y="421" width="12" height="12" fill="#904800"/><rect x="1579" y="421" width="24" height="12" fill="#904000"/><rect x="1603" y="421" width="12" height="12" fill="#903800"/><rect x="1615" y="421" width="24" height="12" fill="#903000"/><rect x="1639" y="421" width="24" height="12" fill="#902800"/><rect x="1663" y="421" width="36" height="12" fill="#902000"/><rect x="1699" y="421" width="48" height="12" fill="#901800"/><rect x="1747" y="421" width="48" height="12" fill="#901000"/><rect x="1795" y="421" width="72" height="12" fill="#900800"/><rect x="1135" y="433" width="72" height="12" fill="#009040"/><rect x="1207" y="433" width="60" height="12" fill="#009038"/><rect x="1267" y="433" width="60" height="12" fill="#009030"/><rect x="1327" y="433" width="36" height="12" fill="#009028"/><rect x="1363" y="433" width="12" height="12" fill="#00f840"/><rect x="1375" y="433" width="12" height="12" fill="#18f840"/><rect x="1387" y="433" width="12" height="12" fill="#28f838"/><rect x="1399" y="433" width="12" height="12" fill="#40f830"/><rect x="1411" y="433" width="12" height="12" fill="#58f830"/><rect x="1423" y="433" width="12" height="12" fill="#70f828"/><rect x="1435" y="433" width="12" height="12" fill="#88f828"/><rect x="1447" y="433" width="12" height="12" fill="#a8f820"/><rect x="1459" y="433" width="12" height="12" fill="#c0f818"/><rect x="1471" y="433" width="12" height="12" fill="#e0f818"/><rect x="1483" y="433" width="12" height="12" fill="#f8f810"/><rect x="1495" y="433" width="12" height="12" fill="#f8d808"/><rect x="1507" y="433" width="12" height="12" fill="#f8c000"/><rect x="1519" y="433" width="12" height="12" fill="#906000"/><rect x="1531" y="433" width="12" height="12" fill="#905800"/><rect x="1543" y="433" width="12" height="12" fill="#905000"/><rect x="1555" y="433" width="12" height="12" fill="#904800"/><rect x="1567" y="433" width="12" height="12" fill="#904000"/><rect x="1579" y="433" width="24" height="12" fill="#903800"/><rect x="1603" y="433" width="24" height="12" fill="#903000"/><rect x="1627" y="433" width="24" height="12" fill="#902800"/><rect x="1651" y="433" width="36" height="12" fill="#902000"/><rect x="1687" y="433" width="36" height="12" fill="#901800"/><rect x="1723" y="433" width="48" height="12" fill="#901000"/><rect x="1771" y="433" width="72" height="12" fill="#900800"/><rect x="1843" y="433" width="24" height="12" fill="#900000"/><rect x="1135" y="445" width="60" height="12" fill="#009048"/><rect x="1195" y="445" width="72" height="12" fill="#009040"/><rect x="1267" y="445" width="48" height="12" fill="#009038"/><rect x="1315" y="445" width="48" height="12" fill="#009030"/><rect x="1363" y="445" width="12" height="12" fill="#08f850"/><rect x="1375" y="445" width="12" height="12" fill="#20f848"/><rect x="1387" y="445" width="12" height="12" fill="#38f848"/><rect x="1399" y="445" width="12" height="12" fill="#50f840"/><rect x="1411" y="445" width="12" height="12" fill="#68f840"/><rect x="1423" y="445" width="12" height="12" fill="#80f838"/><rect x="1435" y="445" width="12" height="12" fill="#a0f830"/><rect x="1447" y="445" width="12" height="12" fill="#b8f830"/><rect x="1459" y="445" width="12" height="12" fill="#d8f828"/><rect x="1471" y="445" width="12" height="12" fill="#f8f820"/><rect x="1483" y="445" width="12" height="12" fill="#f8e018"/><rect x="1495" y="445" width="12" height="12" fill="#f8c810"/><rect x="1507" y="445" width="12" height="12" fill="#f8b008"/><rect x="1519" y="445" width="12" height="12" fill="#f8a000"/><rect x="1531" y="445" width="12" height="12" fill="#f89000"/><rect x="1543" y="445" width="12" height="12" fill="#904800"/><rect x="1555" y="445" width="12" height="12" fill="#904000"/><rect x="1567" y="445" width="24" height="12" fill="#903800"/><rect x="1591" y="445" width="24" height="12" fill="#903000"/><rect x="1615" y="445" width="24" height="12" fill="#902800"/><rect x="1639" y="445" width="24" height="12" fill="#902000"/><rect x="1663" y="445" width="36" height="12" fill="#901800"/><rect x="1699" y="445" width="48" height="12" fill="#901000"/><rect x="1747" y="445" width="72" height="12" fill="#900800"/><rect x="1819" y="445" width="48" height="12" fill="#900000"/><rect x="1135" y="457" width="48" height="12" fill="#009050"/><rect x="1183" y="457" width="72" height="12" fill="#009048"/><rect x="1255" y="457" width="60" height="12" fill="#009040"/><rect x="1315" y="457" width="48" height="12" fill="#009038"/><rect x="1363" y="457" width="12" height="12" fill="#10f858"/><rect x="1375" y="457" width="12" height="12" fill="#28f858"/><rect x="1387" y="457" width="12" height="12" fill="#40f858"/><rect x="1399" y="457" width="12" height="12" fill="#58f850"/><rect x="1411" y="457" width="12" height="12" fill="#78f848"/><rect x="1423" y="457" width="12" height="12" fill="#90f848"/><rect x="1435" y="457" width="12" height="12" fill="#b0f840"/><rect x="1447" y="457" width="12" height="12" fill="#d0f840"/><rect x="1459" y="457" width="12" height="12" fill="#f0f838"/><rect x="1471" y="457" width="12" height="12" fill="#f8e028"/><rect x="1483" y="457" width="12" height="12" fill="#f8c820"/><rect x="1495" y="457" width="12" height="12" fill="#f8b018"/><rect x="1507" y="457" width="12" height="12" fill="#f8a010"/><rect x="1519" y="457" width="12" height="12" fill="#f89008"/><rect x="1531" y="457" width="12" height="12" fill="#f88008"/><rect x="1543" y="457" width="12" height="12" fill="#f87000"/><rect x="1555" y="457" width="24" height="12" fill="#903800"/><rect x="1579" y="457" width="12" height="12" fill="#903000"/><rect x="1591" y="457" width="24" height="12" fill="#902800"/><rect x="1615" y="457" width="36" height="12" fill="#902000"/><rect x="1651" y="457" width="36" height="12" fill="#901800"/><rect x="1687" y="457" width="48" height="12" fill="#901000"/><rect x="1735" y="457" width="60" height="12" fill="#900800"/><rect x="1795" y="457" width="72" height="12" fill="#900000"/><rect x="1135" y="469" width="48" height="12" fill="#009058"/><rect x="1183" y="469" width="84" height="12" fill="#009050"/><rect x="1267" y="469" width="60" height="12" fill="#009048"/><rect x="1327" y="469" width="24" height="12" fill="#009040"/><rect x="1351" y="469" width="12" height="12" fill="#00f870"/><rect x="1363" y="469" width="12" height="12" fill="#18f870"/><rect x="1375" y="469" width="12" height="12" fill="#38f868"/><rect x="1387" y="469" width="12" height="12" fill="#50f868"/><rect x="1399" y="469" width="12" height="12" fill="#68f860"/><rect x="1411" y="469" width="12" height="12" fill="#88f860"/><rect x="1423" y="469" width="12" height="12" fill="#a8f858"/><rect x="1435" y="469" width="12" height="12" fill="#c8f850"/><rect x="1447" y="469" width="12" height="12" fill="#e8f850"/><rect x="1459" y="469" width="12" height="12" fill="#f8e840"/><rect x="1471" y="469" width="12" height="12" fill="#f8c838"/><rect x="1483" y="469" width="12" height="12" fill="#f8b028"/><rect x="1495" y="469" width="12" height="12" fill="#f8a020"/><rect x="1507" y="469" width="12" height="12" fill="#f89018"/><rect x="1519" y="469" width="12" height="12" fill="#f88010"/><rect x="1531" y="469" width="12" height="12" fill="#f87010"/><rect x="1543" y="469" width="12" height="12" fill="#f86808"/><rect x="1555" y="469" width="12" height="12" fill="#f85800"/><rect x="1567" y="469" width="12" height="12" fill="#f85000"/><rect x="1579" y="469" width="24" height="12" fill="#902800"/><rect x="1603" y="469" width="24" height="12" fill="#902000"/><rect x="1627" y="469" width="36" height="12" fill="#901800"/><rect x="1663" y="469" width="48" height="12" fill="#901000"/><rect x="1711" y="469" width="60" height="12" fill="#900800"/><rect x="1771" y="469" width="96" height="12" fill="#900000"/><rect x="1135" y="481" width="60" height="12" fill="#009060"/><rect x="1195" y="481" width="84" height="12" fill="#009058"/><rect x="1279" y="481" width="60" height="12" fill="#009050"/><rect x="1339" y="481" width="12" height="12" fill="#009048"/><rect x="1351" y="481" width="12" height="12" fill="#10f880"/><rect x="1363" y="481" width="12" height="12" fill="#28f880"/><rect x="1375" y="481" width="12" height="12" fill="#40f878"/><rect x="1387" y="481" width="12" height="12" fill="#60f878"/><rect x="1399" y="481" width="12" height="12" fill="#80f870"/><rect x="1411" y="481" width="12" height="12" fill="#a0f870"/><rect x="1423" y="481" width="12" height="12" fill="#c0f868"/><rect x="1435" y="481" width="12" height="12" fill="#e0f868"/><rect x="1447" y="481" width="12" height="12" fill="#f8f060"/><rect x="1459" y="481" width="12" height="12" fill="#f8d048"/><rect x="1471" y="481" width="12" height="12" fill="#f8b040"/><rect x="1483" y="481" width="12" height="12" fill="#f8a030"/><rect x="1495" y="481" width="12" height="12" fill="#f88828"/><rect x="1507" y="481" width="12" height="12" fill="#f88020"/><rect x="1519" y="481" width="12" height="12" fill="#f87018"/><rect x="1531" y="481" width="12" height="12" fill="#f86010"/><rect x="1543" y="481" width="12" height="12" fill="#f85810"/><rect x="1555" y="481" width="12" height="12" fill="#f85008"/><rect x="1567" y="481" width="12" height="12" fill="#f84808"/><rect x="1579" y="481" width="12" height="12" fill="#f84000"/><rect x="1591" y="481" width="12" height="12" fill="#f83800"/><rect x="1603" y="481" width="12" height="12" fill="#902000"/><rect x="1615" y="481" width="24" height="12" fill="#901800"/><rect x="1639" y="481" width="48" height="12" fill="#901000"/><rect x="1687" y="481" width="60" height="12" fill="#900800"/><rect x="1747" y="481" width="120" height="12" fill="#900000"/><rect x="1135" y="493" width="84" height="12" fill="#009068"/><rect x="1219" y="493" width="84" height="12" fill="#009060"/><rect x="1303" y="493" width="36" height="12" fill="#009058"/><rect x="1339" y="493" width="12" height="12" fill="#00f898"/><rect x="1351" y="493" width="12" height="12" fill="#18f898"/><rect x="1363" y="493" width="12" height="12" fill="#30f890"/><rect x="1375" y="493" width="12" height="12" fill="#50f890"/><rect x="1387" y="493" width="12" height="12" fill="#70f890"/><rect x="1399" y="493" width="12" height="12" fill="#90f888"/><rect x="1411" y="493" width="12" height="12" fill="#b8f888"/><rect x="1423" y="493" width="12" height="12" fill="#d8f880"/><rect x="1435" y="493" width="12" height="12" fill="#f8f878"/><rect x="1447" y="493" width="12" height="12" fill="#f8d068"/><rect x="1459" y="493" width="12" height="12" fill="#f8b858"/><rect x="1471" y="493" width="12" height="12" fill="#f8a048"/><rect x="1483" y="493" width="12" height="12" fill="#f88838"/><rect x="1495" y="493" width="12" height="12" fill="#f87830"/><rect x="1507" y="493" width="12" height="12" fill="#f87028"/><rect x="1519" y="493" width="12" height="12" fill="#f86020"/><rect x="1531" y="493" width="12" height="12" fill="#f85818"/><rect x="1543" y="493" width="12" height="12" fill="#f85018"/><rect x="1555" y="493" width="12" height="12" fill="#f84810"/><rect x="1567" y="493" width="12" height="12" fill="#f84008"/><rect x="1579" y="493" width="12" height="12" fill="#f83808"/><rect x="1591" y="493" width="12" height="12" fill="#f83000"/><rect x="1603" y="493" width="12" height="12" fill="#f82800"/><rect x="1615" y="493" width="12" height="12" fill="#901800"/><rect x="1627" y="493" width="36" height="12" fill="#901000"/><rect x="1663" y="493" width="60" height="12" fill="#900800"/><rect x="1723" y="493" width="144" height="12" fill="#900000"/><rect x="1135" y="505" width="120" height="12" fill="#009070"/><rect x="1255" y="505" width="84" height="12" fill="#009068"/><rect x="1339" y="505" width="12" height="12" fill="#08f8b0"/><rect x="1351" y="505" width="12" height="12" fill="#20f8b0"/><rect x="1363" y="505" width="12" height="12" fill="#40f8a8"/><rect x="1375" y="505" width="12" height="12" fill="#60f8a8"/><rect x="1387" y="505" width="12" height="12" fill="#88f8a8"/><rect x="1399" y="505" width="12" height="12" fill="#a8f8a0"/><rect x="1411" y="505" width="12" height="12" fill="#d0f8a0"/><rect x="1423" y="505" width="12" height="12" fill="#f8f8a0"/><rect x="1435" y="505" width="12" height="12" fill="#f8d880"/><rect x="1447" y="505" width="12" height="12" fill="#f8b870"/><rect x="1459" y="505" width="12" height="12" fill="#f8a058"/><rect x="1471" y="505" width="12" height="12" fill="#f88850"/><rect x="1483" y="505" width="12" height="12" fill="#f87840"/><rect x="1495" y="505" width="12" height="12" fill="#f86838"/><rect x="1507" y="505" width="12" height="12" fill="#f86030"/><rect x="1519" y="505" width="12" height="12" fill="#f85028"/><rect x="1531" y="505" width="12" height="12" fill="#f84820"/><rect x="1543" y="505" width="12" height="12" fill="#f84018"/><rect x="1555" y="505" width="12" height="12" fill="#f83818"/><rect x="1567" y="505" width="12" height="12" fill="#f83010"/><rect x="1579" y="505" width="12" height="12" fill="#f83008"/><rect x="1591" y="505" width="12" height="12" fill="#f82808"/><rect x="1603" y="505" width="12" height="12" fill="#f82008"/><rect x="1615" y="505" width="12" height="12" fill="#f82000"/><rect x="1627" y="505" width="12" height="12" fill="#f81800"/><rect x="1639" y="505" width="60" height="12" fill="#900800"/><rect x="1699" y="505" width="168" height="12" fill="#900000"/><rect x="1135" y="517" width="48" height="12" fill="#009080"/><rect x="1183" y="517" width="156" height="12" fill="#009078"/><rect x="1339" y="517" width="12" height="12" fill="#10f8c8"/><rect x="1351" y="517" width="12" height="12" fill="#30f8c8"/><rect x="1363" y="517" width="12" height="12" fill="#50f8c8"/><rect x="1375" y="517" width="12" height="12" fill="#78f8c8"/><rect x="1387" y="517" width="12" height="12" fill="#a0f8c0"/><rect x="1399" y="517" width="12" height="12" fill="#c8f8c0"/><rect x="1411" y="517" width="12" height="12" fill="#f0f8c0"/><rect x="1423" y="517" width="12" height="12" fill="#f8d8a8"/><rect x="1435" y="517" width="12" height="12" fill="#f8b888"/><rect x="1447" y="517" width="12" height="12" fill="#f8a078"/><rect x="1459" y="517" width="12" height="12" fill="#f88860"/><rect x="1471" y="517" width="12" height="12" fill="#f87858"/><rect x="1483" y="517" width="12" height="12" fill="#f86848"/><rect x="1495" y="517" width="12" height="12" fill="#f86040"/><rect x="1507" y="517" width="12" height="12" fill="#f85038"/><rect x="1519" y="517" width="12" height="12" fill="#f84830"/><rect x="1531" y="517" width="12" height="12" fill="#f84028"/><rect x="1543" y="517" width="12" height="12" fill="#f83820"/><rect x="1555" y="517" width="12" height="12" fill="#f83018"/><rect x="1567" y="517" width="12" height="12" fill="#f82818"/><rect x="1579" y="517" width="12" height="12" fill="#f82810"/><rect x="1591" y="517" width="12" height="12" fill="#f82010"/><rect x="1603" y="517" width="24" height="12" fill="#f81808"/><rect x="1627" y="517" width="36" height="12" fill="#f81000"/><rect x="1663" y="517" width="204" height="12" fill="#900000"/><rect x="1135" y="529" width="192" height="12" fill="#009088"/><rect x="1327" y="529" width="12" height="12" fill="#00f8e8"/><rect x="1339" y="529" width="12" height="12" fill="#20f8e8"/><rect x="1351" y="529" width="12" height="12" fill="#40f8e8"/><rect x="1363" y="529" width="12" height="12" fill="#68f8e8"/><rect x="1375" y="529" width="12" height="12" fill="#90f8e8"/><rect x="1387" y="529" width="12" height="12" fill="#b8f8e8"/><rect x="1399" y="529" width="12" height="12" fill="#e8f8e8"/><rect x="1411" y="529" width="12" height="12" fill="#f8e0d0"/><rect x="1423" y="529" width="12" height="12" fill="#f8c0a8"/><rect x="1435" y="529" width="12" height="12" fill="#f8a090"/><rect x="1447" y="529" width="12" height="12" fill="#f88878"/><rect x="1459" y="529" width="12" height="12" fill="#f87868"/><rect x="1471" y="529" width="12" height="12" fill="#f86858"/><rect x="1483" y="529" width="12" height="12" fill="#f85850"/><rect x="1495" y="529" width="12" height="12" fill="#f85048"/><rect x="1507" y="529" width="12" height="12" fill="#f84838"/><rect x="1519" y="529" width="12" height="12" fill="#f83830"/><rect x="1531" y="529" width="24" height="12" fill="#f83028"/><rect x="1555" y="529" width="12" height="12" fill="#f82820"/><rect x="1567" y="529" width="24" height="12" fill="#f82018"/><rect x="1591" y="529" width="12" height="12" fill="#f81810"/><rect x="1603" y="529" width="12" height="12" fill="#f81010"/><rect x="1615" y="529" width="24" height="12" fill="#f81008"/><rect x="1639" y="529" width="24" height="12" fill="#f80800"/><rect x="1663" y="529" width="12" height="12" fill="#f80000"/><rect x="1675" y="529" width="192" height="12" fill="#900000"/><rect x="1135" y="541" width="192" height="12" fill="#008890"/><rect x="1327" y="541" width="12" height="12" fill="#08e8f8"/><rect x="1339" y="541" width="12" height="12" fill="#30e8f8"/><rect x="1351" y="541" width="12" height="12" fill="#50e8f8"/><rect x="1363" y="541" width="12" height="12" fill="#78e8f8"/><rect x="1375" y="541" width="12" height="12" fill="#a0e8f8"/><rect x="1387" y="541" width="12" height="12" fill="#c8e8f8"/><rect x="1399" y="541" width="12" height="12" fill="#f8e8f8"/><rect x="1411" y="541" width="12" height="12" fill="#f8c0d0"/><rect x="1423" y="541" width="12" height="12" fill="#f8a0b0"/><rect x="1435" y="541" width="12" height="12" fill="#f88898"/><rect x="1447" y="541" width="12" height="12" fill="#f87880"/><rect x="1459" y="541" width="12" height="12" fill="#f86870"/><rect x="1471" y="541" width="12" height="12" fill="#f85860"/><rect x="1483" y="541" width="12" height="12" fill="#f84858"/><rect x="1495" y="541" width="12" height="12" fill="#f84048"/><rect x="1507" y="541" width="12" height="12" fill="#f83840"/><rect x="1519" y="541" width="12" height="12" fill="#f83038"/><rect x="1531" y="541" width="12" height="12" fill="#f82830"/><rect x="1543" y="541" width="24" height="12" fill="#f82028"/><rect x="1567" y="541" width="12" height="12" fill="#f81820"/><rect x="1579" y="541" width="12" height="12" fill="#f81818"/><rect x="1591" y="541" width="12" height="12" fill="#f81018"/><rect x="1603" y="541" width="12" height="12" fill="#f81010"/><rect x="1615" y="541" width="12" height="12" fill="#f80810"/><rect x="1627" y="541" width="12" height="12" fill="#f80808"/><rect x="1639" y="541" width="24" height="12" fill="#f80008"/><rect x="1663" y="541" width="12" height="12" fill="#f80000"/><rect x="1675" y="541" width="192" height="12" fill="#900000"/><rect x="1135" y="553" width="72" height="12" fill="#008090"/><rect x="1207" y="553" width="120" height="12" fill="#007890"/><rect x="1327" y="553" width="12" height="12" fill="#18c8f8"/><rect x="1339" y="553" width="12" height="12" fill="#38c8f8"/><rect x="1351" y="553" width="12" height="12" fill="#58c8f8"/><rect x="1363" y="553" width="12" height="12" fill="#78c8f8"/><rect x="1375" y="553" width="12" height="12" fill="#a0c8f8"/><rect x="1387" y="553" width="12" height="12" fill="#c8c0f8"/><rect x="1399" y="553" width="12" height="12" fill="#f8c0f8"/><rect x="1411" y="553" width="12" height="12" fill="#f8a0d8"/><rect x="1423" y="553" width="12" height="12" fill="#f888b8"/><rect x="1435" y="553" width="12" height="12" fill="#f870a0"/><rect x="1447" y="553" width="12" height="12" fill="#f86088"/><rect x="1459" y="553" width="12" height="12" fill="#f85078"/><rect x="1471" y="553" width="12" height="12" fill="#f84868"/><rect x="1483" y="553" width="12" height="12" fill="#f84058"/><rect x="1495" y="553" width="12" height="12" fill="#f83050"/><rect x="1507" y="553" width="12" height="12" fill="#f83048"/><rect x="1519" y="553" width="12" height="12" fill="#f82840"/><rect x="1531" y="553" width="12" height="12" fill="#f82038"/><rect x="1543" y="553" width="12" height="12" fill="#f81830"/><rect x="1555" y="553" width="12" height="12" fill="#f81828"/><rect x="1567" y="553" width="12" height="12" fill="#f81028"/><rect x="1579" y="553" width="12" height="12" fill="#f81020"/><rect x="1591" y="553" width="24" height="12" fill="#f80818"/><rect x="1615" y="553" width="24" height="12" fill="#f80010"/><rect x="1639" y="553" width="12" height="12" fill="#900008"/><rect x="1651" y="553" width="216" height="12" fill="#900000"/><rect x="1135" y="565" width="120" height="12" fill="#007090"/><rect x="1255" y="565" width="60" height="12" fill="#006890"/><rect x="1315" y="565" width="12" height="12" fill="#00b0f8"/><rect x="1327" y="565" width="12" height="12" fill="#20b0f8"/><rect x="1339" y="565" width="12" height="12" fill="#40b0f8"/><rect x="1351" y="565" width="12" height="12" fill="#60a8f8"/><rect x="1363" y="565" width="12" height="12" fill="#80a8f8"/><rect x="1375" y="565" width="12" height="12" fill="#a0a8f8"/><rect x="1387" y="565" width="12" height="12" fill="#c8a0f8"/><rect x="1399" y="565" width="12" height="12" fill="#f0a0f8"/><rect x="1411" y="565" width="12" height="12" fill="#f888d8"/><rect x="1423" y="565" width="12" height="12" fill="#f870b8"/><rect x="1435" y="565" width="12" height="12" fill="#f860a0"/><rect x="1447" y="565" width="12" height="12" fill="#f85090"/><rect x="1459" y="565" width="12" height="12" fill="#f84080"/><rect x="1471" y="565" width="12" height="12" fill="#f83870"/><rect x="1483" y="565" width="12" height="12" fill="#f83060"/><rect x="1495" y="565" width="12" height="12" fill="#f82858"/><rect x="1507" y="565" width="12" height="12" fill="#f82048"/><rect x="1519" y="565" width="12" height="12" fill="#f81840"/><rect x="1531" y="565" width="12" height="12" fill="#f81838"/><rect x="1543" y="565" width="12" height="12" fill="#f81038"/><rect x="1555" y="565" width="12" height="12" fill="#f80830"/><rect x="1567" y="565" width="12" height="12" fill="#f80828"/><rect x="1579" y="565" width="12" height="12" fill="#f80820"/><rect x="1591" y="565" width="12" height="12" fill="#f80020"/><rect x="1603" y="565" width="12" height="12" fill="#f80018"/><rect x="1615" y="565" width="60" height="12" fill="#900008"/><rect x="1675" y="565" width="192" height="12" fill="#900000"/><rect x="1135" y="577" width="60" height="12" fill="#006890"/><rect x="1195" y="577" width="84" height="12" fill="#006090"/><rect x="1279" y="577" width="36" height="12" fill="#005890"/><rect x="1315" y="577" width="12" height="12" fill="#1098f8"/><rect x="1327" y="577" width="12" height="12" fill="#2898f8"/><rect x="1339" y="577" width="12" height="12" fill="#4890f8"/><rect x="1351" y="577" width="12" height="12" fill="#6090f8"/><rect x="1363" y="577" width="12" height="12" fill="#8090f8"/><rect x="1375" y="577" width="12" height="12" fill="#a888f8"/><rect x="1387" y="577" width="12" height="12" fill="#c888f8"/><rect x="1399" y="577" width="12" height="12" fill="#f080f8"/><rect x="1411" y="577" width="12" height="12" fill="#f870e0"/><rect x="1423" y="577" width="12" height="12" fill="#f858c0"/><rect x="1435" y="577" width="12" height="12" fill="#f848a8"/><rect x="1447" y="577" width="12" height="12" fill="#f84090"/><rect x="1459" y="577" width="12" height="12" fill="#f83880"/><rect x="1471" y="577" width="12" height="12" fill="#f82870"/><rect x="1483" y="577" width="12" height="12" fill="#f82068"/><rect x="1495" y="577" width="12" height="12" fill="#f82058"/><rect x="1507" y="577" width="12" height="12" fill="#f81850"/><rect x="1519" y="577" width="12" height="12" fill="#f81048"/><rect x="1531" y="577" width="12" height="12" fill="#f80840"/><rect x="1543" y="577" width="12" height="12" fill="#f80838"/><rect x="1555" y="577" width="24" height="12" fill="#f80030"/><rect x="1579" y="577" width="12" height="12" fill="#f80028"/><rect x="1591" y="577" width="48" height="12" fill="#900010"/><rect x="1639" y="577" width="48" height="12" fill="#900008"/><rect x="1687" y="577" width="180" height="12" fill="#900000"/><rect x="1135" y="589" width="36" height="12" fill="#006090"/><rect x="1171" y="589" width="72" height="12" fill="#005890"/><rect x="1243" y="589" width="60" height="12" fill="#005090"/><rect x="1303" y="589" width="12" height="12" fill="#004890"/><rect x="1315" y="589" width="12" height="12" fill="#1880f8"/><rect x="1327" y="589" width="12" height="12" fill="#3080f8"/><rect x="1339" y="589" width="12" height="12" fill="#4878f8"/><rect x="1351" y="589" width="12" height="12" fill="#6878f8"/><rect x="1363" y="589" width="12" height="12" fill="#8870f8"/><rect x="1375" y="589" width="12" height="12" fill="#a870f8"/><rect x="1387" y="589" width="12" height="12" fill="#c868f8"/><rect x="1399" y="589" width="12" height="12" fill="#f068f8"/><rect x="1411" y="589" width="12" height="12" fill="#f858e0"/><rect x="1423" y="589" width="12" height="12" fill="#f848c8"/><rect x="1435" y="589" width="12" height="12" fill="#f838a8"/><rect x="1447" y="589" width="12" height="12" fill="#f83098"/><rect x="1459" y="589" width="12" height="12" fill="#f82888"/><rect x="1471" y="589" width="12" height="12" fill="#f82078"/><rect x="1483" y="589" width="12" height="12" fill="#f81868"/><rect x="1495" y="589" width="12" height="12" fill="#f81060"/><rect x="1507" y="589" width="12" height="12" fill="#f80858"/><rect x="1519" y="589" width="12" height="12" fill="#f80850"/><rect x="1531" y="589" width="12" height="12" fill="#f80048"/><rect x="1543" y="589" width="12" height="12" fill="#f80040"/><rect x="1555" y="589" width="12" height="12" fill="#900020"/><rect x="1567" y="589" width="36" height="12" fill="#900018"/><rect x="1603" y="589" width="48" height="12" fill="#900010"/><rect x="1651" y="589" width="48" height="12" fill="#900008"/><rect x="1699" y="589" width="168" height="12" fill="#900000"/><rect x="1135" y="601" width="12" height="12" fill="#005890"/><rect x="1147" y="601" width="72" height="12" fill="#005090"/><rect x="1219" y="601" width="60" height="12" fill="#004890"/><rect x="1279" y="601" width="24" height="12" fill="#004090"/><rect x="1303" y="601" width="12" height="12" fill="#0870f8"/><rect x="1315" y="601" width="12" height="12" fill="#2070f8"/><rect x="1327" y="601" width="12" height="12" fill="#3868f8"/><rect x="1339" y="601" width="12" height="12" fill="#5068f8"/><rect x="1351" y="601" width="12" height="12" fill="#7060f8"/><rect x="1363" y="601" width="12" height="12" fill="#8860f8"/><rect x="1375" y="601" width="12" height="12" fill="#a858f8"/><rect x="1387" y="601" width="12" height="12" fill="#c850f8"/><rect x="1399" y="601" width="12" height="12" fill="#f050f8"/><rect x="1411" y="601" width="12" height="12" fill="#f840e8"/><rect x="1423" y="601" width="12" height="12" fill="#f838c8"/><rect x="1435" y="601" width="12" height="12" fill="#f828b0"/><rect x="1447" y="601" width="12" height="12" fill="#f820a0"/><rect x="1459" y="601" width="12" height="12" fill="#f81888"/><rect x="1471" y="601" width="12" height="12" fill="#f81080"/><rect x="1483" y="601" width="12" height="12" fill="#f80870"/><rect x="1495" y="601" width="12" height="12" fill="#f80868"/><rect x="1507" y="601" width="12" height="12" fill="#f80058"/><rect x="1519" y="601" width="12" height="12" fill="#f80050"/><rect x="1531" y="601" width="24" height="12" fill="#900028"/><rect x="1555" y="601" width="24" height="12" fill="#900020"/><rect x="1579" y="601" width="36" height="12" fill="#900018"/><rect x="1615" y="601" width="48" height="12" fill="#900010"/><rect x="1663" y="601" width="60" height="12" fill="#900008"/><rect x="1723" y="601" width="144" height="12" fill="#900000"/><rect x="1135" y="613" width="72" height="12" fill="#004890"/><rect x="1207" y="613" width="60" height="12" fill="#004090"/><rect x="1267" y="613" width="36" height="12" fill="#003890"/><rect x="1303" y="613" width="12" height="12" fill="#1060f8"/><rect x="1315" y="613" width="12" height="12" fill="#2058f8"/><rect x="1327" y="613" width="12" height="12" fill="#3858f8"/><rect x="1339" y="613" width="12" height="12" fill="#5850f8"/><rect x="1351" y="613" width="12" height="12" fill="#7050f8"/><rect x="1363" y="613" width="12" height="12" fill="#9048f8"/><rect x="1375" y="613" width="12" height="12" fill="#a840f8"/><rect x="1387" y="613" width="12" height="12" fill="#c840f8"/><rect x="1399" y="613" width="12" height="12" fill="#f038f8"/><rect x="1411" y="613" width="12" height="12" fill="#f830e8"/><rect x="1423" y="613" width="12" height="12" fill="#f820c8"/><rect x="1435" y="613" width="12" height="12" fill="#f818b8"/><rect x="1447" y="613" width="12" height="12" fill="#f810a0"/><rect x="1459" y="613" width="12" height="12" fill="#f80890"/><rect x="1471" y="613" width="12" height="12" fill="#f80880"/><rect x="1483" y="613" width="12" height="12" fill="#f80078"/><rect x="1495" y="613" width="24" height="12" fill="#900038"/><rect x="1519" y="613" width="12" height="12" fill="#900030"/><rect x="1531" y="613" width="24" height="12" fill="#900028"/><rect x="1555" y="613" width="36" height="12" fill="#900020"/><rect x="1591" y="613" width="36" height="12" fill="#900018"/><rect x="1627" y="613" width="48" height="12" fill="#900010"/><rect x="1675" y="613" width="60" height="12" fill="#900008"/><rect x="1735" y="613" width="132" height="12" fill="#900000"/><rect x="1135" y="625" width="60" height="12" fill="#004090"/><rect x="1195" y="625" width="60" height="12" fill="#003890"/><rect x="1255" y="625" width="36" height="12" fill="#003090"/><rect x="1291" y="625" width="12" height="12" fill="#0050f8"/><rect x="1303" y="625" width="12" height="12" fill="#1048f8"/><rect x="1315" y="625" width="12" height="12" fill="#2848f8"/><rect x="1327" y="625" width="12" height="12" fill="#4040f8"/><rect x="1339" y="625" width="12" height="12" fill="#5840f8"/><rect x="1351" y="625" width="12" height="12" fill="#7838f8"/><rect x="1363" y="625" width="12" height="12" fill="#9038f8"/><rect x="1375" y="625" width="12" height="12" fill="#b030f8"/><rect x="1387" y="625" width="12" height="12" fill="#c828f8"/><rect x="1399" y="625" width="12" height="12" fill="#e828f8"/><rect x="1411" y="625" width="12" height="12" fill="#f818e8"/><rect x="1423" y="625" width="12" height="12" fill="#f810d0"/><rect x="1435" y="625" width="12" height="12" fill="#f808b8"/><rect x="1447" y="625" width="12" height="12" fill="#f808a8"/><rect x="1459" y="625" width="12" height="12" fill="#f80090"/><rect x="1471" y="625" width="24" height="12" fill="#900048"/><rect x="1495" y="625" width="12" height="12" fill="#900040"/><rect x="1507" y="625" width="12" height="12" fill="#900038"/><rect x="1519" y="625" width="24" height="12" fill="#900030"/><rect x="1543" y="625" width="24" height="12" fill="#900028"/><rect x="1567" y="625" width="36" height="12" fill="#900020"/><rect x="1603" y="625" width="36" height="12" fill="#900018"/><rect x="1639" y="625" width="48" height="12" fill="#900010"/><rect x="1687" y="625" width="60" height="12" fill="#900008"/><rect x="1747" y="625" width="120" height="12" fill="#900000"/><rect x="1135" y="637" width="60" height="12" fill="#003890"/><rect x="1195" y="637" width="60" height="12" fill="#003090"/><rect x="1255" y="637" width="36" height="12" fill="#002890"/><rect x="1291" y="637" width="12" height="12" fill="#0840f8"/><rect x="1303" y="637" width="12" height="12" fill="#1838f8"/><rect x="1315" y="637" width="12" height="12" fill="#3038f8"/><rect x="1327" y="637" width="12" height="12" fill="#4830f8"/><rect x="1339" y="637" width="12" height="12" fill="#6030f8"/><rect x="1351" y="637" width="12" height="12" fill="#7828f8"/><rect x="1363" y="637" width="12" height="12" fill="#9020f8"/><rect x="1375" y="637" width="12" height="12" fill="#b020f8"/><rect x="1387" y="637" width="12" height="12" fill="#c818f8"/><rect x="1399" y="637" width="12" height="12" fill="#e810f8"/><rect x="1411" y="637" width="12" height="12" fill="#f808f0"/><rect x="1423" y="637" width="12" height="12" fill="#f800d0"/><rect x="1435" y="637" width="12" height="12" fill="#f800b8"/><rect x="1447" y="637" width="12" height="12" fill="#900060"/><rect x="1459" y="637" width="12" height="12" fill="#900058"/><rect x="1471" y="637" width="12" height="12" fill="#900050"/><rect x="1483" y="637" width="12" height="12" fill="#900048"/><rect x="1495" y="637" width="12" height="12" fill="#900040"/><rect x="1507" y="637" width="24" height="12" fill="#900038"/><rect x="1531" y="637" width="24" height="12" fill="#900030"/><rect x="1555" y="637" width="24" height="12" fill="#900028"/><rect x="1579" y="637" width="24" height="12" fill="#900020"/><rect x="1603" y="637" width="48" height="12" fill="#900018"/><rect x="1651" y="637" width="48" height="12" fill="#900010"/><rect x="1699" y="637" width="72" height="12" fill="#900008"/><rect x="1771" y="637" width="96" height="12" fill="#900000"/><rect x="1135" y="649" width="60" height="12" fill="#003090"/><rect x="1195" y="649" width="48" height="12" fill="#002890"/><rect x="1243" y="649" width="48" height="12" fill="#002090"/><rect x="1291" y="649" width="12" height="12" fill="#1030f8"/><rect x="1303" y="649" width="12" height="12" fill="#2030f8"/><rect x="1315" y="649" width="12" height="12" fill="#3828f8"/><rect x="1327" y="649" width="12" height="12" fill="#4820f8"/><rect x="1339" y="649" width="12" height="12" fill="#6020f8"/><rect x="1351" y="649" width="12" height="12" fill="#7818f8"/><rect x="1363" y="649" width="12" height="12" fill="#9810f8"/><rect x="1375" y="649" width="12" height="12" fill="#b010f8"/><rect x="1387" y="649" width="12" height="12" fill="#c808f8"/><rect x="1399" y="649" width="12" height="12" fill="#e800f8"/><rect x="1411" y="649" width="12" height="12" fill="#900088"/><rect x="1423" y="649" width="12" height="12" fill="#900078"/><rect x="1435" y="649" width="12" height="12" fill="#900070"/><rect x="1447" y="649" width="12" height="12" fill="#900060"/><rect x="1459" y="649" width="12" height="12" fill="#900058"/><rect x="1471" y="649" width="12" height="12" fill="#900050"/><rect x="1483" y="649" width="12" height="12" fill="#900048"/><rect x="1495" y="649" width="24" height="12" fill="#900040"/><rect x="1519" y="649" width="12" height="12" fill="#900038"/><rect x="1531" y="649" width="24" height="12" fill="#900030"/><rect x="1555" y="649" width="24" height="12" fill="#900028"/><rect x="1579" y="649" width="36" height="12" fill="#900020"/><rect x="1615" y="649" width="48" height="12" fill="#900018"/><rect x="1663" y="649" width="48" height="12" fill="#900010"/><rect x="1711" y="649" width="72" height="12" fill="#900008"/><rect x="1783" y="649" width="84" height="12" fill="#900000"/><rect x="1135" y="661" width="12" height="12" fill="#003090"/><rect x="1147" y="661" width="60" height="12" fill="#002890"/><rect x="1207" y="661" width="36" height="12" fill="#002090"/><rect x="1243" y="661" width="36" height="12" fill="#001890"/><rect x="1279" y="661" width="12" height="12" fill="#0028f8"/><rect x="1291" y="661" width="12" height="12" fill="#1020f8"/><rect x="1303" y="661" width="12" height="12" fill="#2820f8"/><rect x="1315" y="661" width="12" height="12" fill="#3818f8"/><rect x="1327" y="661" width="12" height="12" fill="#5018f8"/><rect x="1339" y="661" width="12" height="12" fill="#6810f8"/><rect x="1351" y="661" width="12" height="12" fill="#8008f8"/><rect x="1363" y="661" width="12" height="12" fill="#9808f8"/><rect x="1375" y="661" width="12" height="12" fill="#b000f8"/><rect x="1387" y="661" width="12" height="12" fill="#780090"/><rect x="1399" y="661" width="12" height="12" fill="#880090"/><rect x="1411" y="661" width="12" height="12" fill="#900088"/><rect x="1423" y="661" width="12" height="12" fill="#900078"/><rect x="1435" y="661" width="12" height="12" fill="#900070"/><rect x="1447" y="661" width="12" height="12" fill="#900068"/><rect x="1459" y="661" width="12" height="12" fill="#900058"/><rect x="1471" y="661" width="12" height="12" fill="#900050"/><rect x="1483" y="661" width="24" height="12" fill="#900048"/><rect x="1507" y="661" width="12" height="12" fill="#900040"/><rect x="1519" y="661" width="24" height="12" fill="#900038"/><rect x="1543" y="661" width="24" height="12" fill="#900030"/><rect x="1567" y="661" width="24" height="12" fill="#900028"/><rect x="1591" y="661" width="36" height="12" fill="#900020"/><rect x="1627" y="661" width="48" height="12" fill="#900018"/><rect x="1675" y="661" width="48" height="12" fill="#900010"/><rect x="1723" y="661" width="72" height="12" fill="#900008"/><rect x="1795" y="661" width="72" height="12" fill="#900000"/><rect x="1135" y="673" width="24" height="12" fill="#002890"/><rect x="1159" y="673" width="48" height="12" fill="#002090"/><rect x="1207" y="673" width="48" height="12" fill="#001890"/><rect x="1255" y="673" width="24" height="12" fill="#001090"/><rect x="1279" y="673" width="12" height="12" fill="#0818f8"/><rect x="1291" y="673" width="12" height="12" fill="#1818f8"/><rect x="1303" y="673" width="12" height="12" fill="#2810f8"/><rect x="1315" y="673" width="12" height="12" fill="#4010f8"/><rect x="1327" y="673" width="12" height="12" fill="#5808f8"/><rect x="1339" y="673" width="12" height="12" fill="#6800f8"/><rect x="1351" y="673" width="12" height="12" fill="#8000f8"/><rect x="1363" y="673" width="12" height="12" fill="#580090"/><rect x="1375" y="673" width="12" height="12" fill="#680090"/><rect x="1387" y="673" width="12" height="12" fill="#780090"/><rect x="1399" y="673" width="12" height="12" fill="#880090"/><rect x="1411" y="673" width="12" height="12" fill="#900090"/><rect x="1423" y="673" width="12" height="12" fill="#900080"/><rect x="1435" y="673" width="12" height="12" fill="#900070"/><rect x="1447" y="673" width="12" height="12" fill="#900068"/><rect x="1459" y="673" width="12" height="12" fill="#900060"/><rect x="1471" y="673" width="12" height="12" fill="#900058"/><rect x="1483" y="673" width="12" height="12" fill="#900050"/><rect x="1495" y="673" width="12" height="12" fill="#900048"/><rect x="1507" y="673" width="12" height="12" fill="#900040"/><rect x="1519" y="673" width="24" height="12" fill="#900038"/><rect x="1543" y="673" width="24" height="12" fill="#900030"/><rect x="1567" y="673" width="36" height="12" fill="#900028"/><rect x="1603" y="673" width="36" height="12" fill="#900020"/><rect x="1639" y="673" width="36" height="12" fill="#900018"/><rect x="1675" y="673" width="60" height="12" fill="#900010"/><rect x="1735" y="673" width="84" height="12" fill="#900008"/><rect x="1819" y="673" width="48" height="12" fill="#900000"/><rect x="1135" y="685" width="36" height="12" fill="#002090"/><rect x="1171" y="685" width="48" height="12" fill="#001890"/><rect x="1219" y="685" width="36" height="12" fill="#001090"/><rect x="1255" y="685" width="24" height="12" fill="#000890"/><rect x="1279" y="685" width="12" height="12" fill="#1010f8"/><rect x="1291" y="685" width="12" height="12" fill="#2008f8"/><rect x="1303" y="685" width="12" height="12" fill="#3008f8"/><rect x="1315" y="685" width="12" height="12" fill="#4800f8"/><rect x="1327" y="685" width="12" height="12" fill="#300090"/><rect x="1339" y="685" width="12" height="12" fill="#400090"/><rect x="1351" y="685" width="12" height="12" fill="#480090"/><rect x="1363" y="685" width="12" height="12" fill="#580090"/><rect x="1375" y="685" width="12" height="12" fill="#680090"/><rect x="1387" y="685" width="12" height="12" fill="#780090"/><rect x="1399" y="685" width="12" height="12" fill="#800090"/><rect x="1411" y="685" width="12" height="12" fill="#900090"/><rect x="1423" y="685" width="12" height="12" fill="#900080"/><rect x="1435" y="685" width="12" height="12" fill="#900070"/><rect x="1447" y="685" width="12" height="12" fill="#900068"/><rect x="1459" y="685" width="12" height="12" fill="#900060"/><rect x="1471" y="685" width="12" height="12" fill="#900058"/><rect x="1483" y="685" width="12" height="12" fill="#900050"/><rect x="1495" y="685" width="12" height="12" fill="#900048"/><rect x="1507" y="685" width="24" height="12" fill="#900040"/><rect x="1531" y="685" width="24" height="12" fill="#900038"/><rect x="1555" y="685" width="24" height="12" fill="#900030"/><rect x="1579" y="685" width="24" height="12" fill="#900028"/><rect x="1603" y="685" width="36" height="12" fill="#900020"/><rect x="1639" y="685" width="48" height="12" fill="#900018"/><rect x="1687" y="685" width="60" height="12" fill="#900010"/><rect x="1747" y="685" width="84" height="12" fill="#900008"/><rect x="1831" y="685" width="36" height="12" fill="#900000"/><rect x="1135" y="697" width="36" height="12" fill="#001890"/><rect x="1171" y="697" width="48" height="12" fill="#001090"/><rect x="1219" y="697" width="48" height="12" fill="#000890"/><rect x="1267" y="697" width="12" height="12" fill="#0008f8"/><rect x="1279" y="697" width="12" height="12" fill="#1000f8"/><rect x="1291" y="697" width="12" height="12" fill="#2000f8"/><rect x="1303" y="697" width="12" height="12" fill="#200090"/><rect x="1315" y="697" width="12" height="12" fill="#280090"/><rect x="1327" y="697" width="12" height="12" fill="#380090"/><rect x="1339" y="697" width="12" height="12" fill="#400090"/><rect x="1351" y="697" width="12" height="12" fill="#500090"/><rect x="1363" y="697" width="12" height="12" fill="#580090"/><rect x="1375" y="697" width="12" height="12" fill="#680090"/><rect x="1387" y="697" width="12" height="12" fill="#780090"/><rect x="1399" y="697" width="12" height="12" fill="#800090"/><rect x="1411" y="697" width="12" height="12" fill="#900090"/><rect x="1423" y="697" width="12" height="12" fill="#900080"/><rect x="1435" y="697" width="12" height="12" fill="#900078"/><rect x="1447" y="697" width="12" height="12" fill="#900068"/><rect x="1459" y="697" width="12" height="12" fill="#900060"/><rect x="1471" y="697" width="12" height="12" fill="#900058"/><rect x="1483" y="697" width="12" height="12" fill="#900050"/><rect x="1495" y="697" width="24" height="12" fill="#900048"/><rect x="1519" y="697" width="12" height="12" fill="#900040"/><rect x="1531" y="697" width="24" height="12" fill="#900038"/><rect x="1555" y="697" width="24" height="12" fill="#900030"/><rect x="1579" y="697" width="36" height="12" fill="#900028"/><rect x="1615" y="697" width="36" height="12" fill="#900020"/><rect x="1651" y="697" width="48" height="12" fill="#900018"/><rect x="1699" y="697" width="60" height="12" fill="#900010"/><rect x="1759" y="697" width="84" height="12" fill="#900008"/><rect x="1843" y="697" width="24" height="12" fill="#900000"/><rect x="1135" y="709" width="48" height="12" fill="#001090"/><rect x="1183" y="709" width="48" height="12" fill="#000890"/><rect x="1231" y="709" width="48" height="12" fill="#000090"/><rect x="1279" y="709" width="12" height="12" fill="#100090"/><rect x="1291" y="709" width="12" height="12" fill="#180090"/><rect x="1303" y="709" width="12" height="12" fill="#200090"/><rect x="1315" y="709" width="12" height="12" fill="#280090"/><rect x="1327" y="709" width="12" height="12" fill="#380090"/><rect x="1339" y="709" width="12" height="12" fill="#400090"/><rect x="1351" y="709" width="12" height="12" fill="#500090"/><rect x="1363" y="709" width="12" height="12" fill="#580090"/><rect x="1375" y="709" width="12" height="12" fill="#680090"/><rect x="1387" y="709" width="12" height="12" fill="#780090"/><rect x="1399" y="709" width="12" height="12" fill="#800090"/><rect x="1411" y="709" width="12" height="12" fill="#900090"/><rect x="1423" y="709" width="12" height="12" fill="#900080"/><rect x="1435" y="709" width="12" height="12" fill="#900078"/><rect x="1447" y="709" width="12" height="12" fill="#900068"/><rect x="1459" y="709" width="12" height="12" fill="#900060"/><rect x="1471" y="709" width="12" height="12" fill="#900058"/><rect x="1483" y="709" width="24" height="12" fill="#900050"/><rect x="1507" y="709" width="12" height="12" fill="#900048"/><rect x="1519" y="709" width="24" height="12" fill="#900040"/><rect x="1543" y="709" width="24" height="12" fill="#900038"/><rect x="1567" y="709" width="24" height="12" fill="#900030"/><rect x="1591" y="709" width="36" height="12" fill="#900028"/><rect x="1627" y="709" width="36" height="12" fill="#900020"/><rect x="1663" y="709" width="48" height="12" fill="#900018"/><rect x="1711" y="709" width="72" height="12" fill="#900010"/><rect x="1783" y="709" width="84" height="12" fill="#900008"/><rect x="1135" y="721" width="24" height="12" fill="#001090"/><rect x="1159" y="721" width="48" height="12" fill="#000890"/><rect x="1207" y="721" width="60" height="12" fill="#000090"/><rect x="1267" y="721" width="12" height="12" fill="#080090"/><rect x="1279" y="721" width="12" height="12" fill="#100090"/><rect x="1291" y="721" width="12" height="12" fill="#180090"/><rect x="1303" y="721" width="12" height="12" fill="#200090"/><rect x="1315" y="721" width="12" height="12" fill="#300090"/><rect x="1327" y="721" width="12" height="12" fill="#380090"/><rect x="1339" y="721" width="12" height="12" fill="#400090"/><rect x="1351" y="721" width="12" height="12" fill="#500090"/><rect x="1363" y="721" width="12" height="12" fill="#580090"/><rect x="1375" y="721" width="12" height="12" fill="#680090"/><rect x="1387" y="721" width="12" height="12" fill="#780090"/><rect x="1399" y="721" width="12" height="12" fill="#800090"/><rect x="1411" y="721" width="12" height="12" fill="#900090"/><rect x="1423" y="721" width="12" height="12" fill="#900080"/><rect x="1435" y="721" width="12" height="12" fill="#900078"/><rect x="1447" y="721" width="12" height="12" fill="#900070"/><rect x="1459" y="721" width="12" height="12" fill="#900068"/><rect x="1471" y="721" width="12" height="12" fill="#900060"/><rect x="1483" y="721" width="12" height="12" fill="#900058"/><rect x="1495" y="721" width="12" height="12" fill="#900050"/><rect x="1507" y="721" width="12" height="12" fill="#900048"/><rect x="1519" y="721" width="24" height="12" fill="#900040"/><rect x="1543" y="721" width="24" height="12" fill="#900038"/><rect x="1567" y="721" width="24" height="12" fill="#900030"/><rect x="1591" y="721" width="36" height="12" fill="#900028"/><rect x="1627" y="721" width="48" height="12" fill="#900020"/><rect x="1675" y="721" width="48" height="12" fill="#900018"/><rect x="1723" y="721" width="72" height="12" fill="#900010"/><rect x="1795" y="721" width="72" height="12" fill="#900008"/><rect x="1135" y="733" width="36" height="12" fill="#000890"/><rect x="1171" y="733" width="96" height="12" fill="#000090"/><rect x="1267" y="733" width="12" height="12" fill="#080090"/><rect x="1279" y="733" width="12" height="12" fill="#100090"/><rect x="1291" y="733" width="12" height="12" fill="#180090"/><rect x="1303" y="733" width="12" height="12" fill="#280090"/><rect x="1315" y="733" width="12" height="12" fill="#300090"/><rect x="1327" y="733" width="12" height="12" fill="#380090"/><rect x="1339" y="733" width="12" height="12" fill="#480090"/><rect x="1351" y="733" width="12" height="12" fill="#500090"/><rect x="1363" y="733" width="12" height="12" fill="#600090"/><rect x="1375" y="733" width="12" height="12" fill="#680090"/><rect x="1387" y="733" width="12" height="12" fill="#780090"/><rect x="1399" y="733" width="12" height="12" fill="#800090"/><rect x="1411" y="733" width="12" height="12" fill="#900090"/><rect x="1423" y="733" width="12" height="12" fill="#900080"/><rect x="1435" y="733" width="12" height="12" fill="#900078"/><rect x="1447" y="733" width="12" height="12" fill="#900070"/><rect x="1459" y="733" width="12" height="12" fill="#900068"/><rect x="1471" y="733" width="12" height="12" fill="#900060"/><rect x="1483" y="733" width="12" height="12" fill="#900058"/><rect x="1495" y="733" width="12" height="12" fill="#900050"/><rect x="1507" y="733" width="24" height="12" fill="#900048"/><rect x="1531" y="733" width="24" height="12" fill="#900040"/><rect x="1555" y="733" width="24" height="12" fill="#900038"/><rect x="1579" y="733" width="24" height="12" fill="#900030"/><rect x="1603" y="733" width="36" height="12" fill="#900028"/><rect x="1639" y="733" width="36" height="12" fill="#900020"/><rect x="1675" y="733" width="60" height="12" fill="#900018"/><rect x="1735" y="733" width="72" height="12" fill="#900010"/><rect x="1807" y="733" width="60" height="12" fill="#900008"/><rect x="1135" y="745" width="132" height="12" fill="#000090"/><rect x="1267" y="745" width="12" height="12" fill="#080090"/><rect x="1279" y="745" width="12" height="12" fill="#180090"/><rect x="1291" y="745" width="12" height="12" fill="#200090"/><rect x="1303" y="745" width="12" height="12" fill="#280090"/><rect x="1315" y="745" width="12" height="12" fill="#300090"/><rect x="1327" y="745" width="12" height="12" fill="#380090"/><rect x="1339" y="745" width="12" height="12" fill="#480090"/><rect x="1351" y="745" width="12" height="12" fill="#500090"/><rect x="1363" y="745" width="12" height="12" fill="#600090"/><rect x="1375" y="745" width="12" height="12" fill="#680090"/><rect x="1387" y="745" width="12" height="12" fill="#780090"/><rect x="1399" y="745" width="12" height="12" fill="#800090"/><rect x="1411" y="745" width="12" height="12" fill="#900090"/><rect x="1423" y="745" width="12" height="12" fill="#900088"/><rect x="1435" y="745" width="12" height="12" fill="#900078"/><rect x="1447" y="745" width="12" height="12" fill="#900070"/><rect x="1459" y="745" width="12" height="12" fill="#900068"/><rect x="1471" y="745" width="12" height="12" fill="#900060"/><rect x="1483" y="745" width="12" height="12" fill="#900058"/><rect x="1495" y="745" width="24" height="12" fill="#900050"/><rect x="1519" y="745" width="12" height="12" fill="#900048"/><rect x="1531" y="745" width="24" height="12" fill="#900040"/><rect x="1555" y="745" width="24" height="12" fill="#900038"/><rect x="1579" y="745" width="36" height="12" fill="#900030"/><rect x="1615" y="745" width="36" height="12" fill="#900028"/><rect x="1651" y="745" width="36" height="12" fill="#900020"/><rect x="1687" y="745" width="60" height="12" fill="#900018"/><rect x="1747" y="745" width="72" height="12" fill="#900010"/><rect x="1819" y="745" width="48" height="12" fill="#900008"/></g></svg>
<canvas id="cv" class="a" style="left:1135px;top:205px" width="727" height="552"></canvas>
<div class="a" style="left:1606px;top:208px;width:256px;height:215px;background:#2a2a2a"></div>
<div class="a" style="left:1610px;top:212px;width:246px;height:208px;border:1px solid #a0a0a0;background:#555"></div>
<svg class="a" style="left:1611px;top:213px" width="244" height="206"><defs><linearGradient id="ig1" x1="0" y1="0" x2="1" y2="1"><stop offset="0" stop-color="#b4ff00"/><stop offset="0.5" stop-color="#ffff10"/><stop offset="1" stop-color="#ffa800"/></linearGradient><linearGradient id="ig2" x1="0" y1="0" x2="1" y2="1"><stop offset="0" stop-color="#5e8e00"/><stop offset="0.5" stop-color="#949400"/><stop offset="1" stop-color="#946200"/></linearGradient></defs><rect width="244" height="206" fill="url(#ig2)"/><path d="M0 21 L244 184 L244 206 L0 206 Z" fill="url(#ig1)"/></svg>
<canvas id="cv2" class="a" style="left:1611px;top:213px" width="244" height="206"></canvas>
<svg class="a" style="left:0;top:0" width="1875" height="1200"><rect x="1385.8" y="354.9" width="15" height="15" fill="none" stroke="#fff" stroke-width="2"/><rect x="1388.7" y="393.0" width="15" height="15" fill="none" stroke="#fff" stroke-width="2"/><rect x="1390.3" y="427.8" width="15" height="15" fill="none" stroke="#fff" stroke-width="2"/><rect x="1393.5" y="461.8" width="15" height="15" fill="none" stroke="#fff" stroke-width="2"/><rect x="1394.9" y="496.9" width="15" height="15" fill="none" stroke="#fff" stroke-width="2"/><rect x="1489.7" y="416.8" width="15" height="15" fill="none" stroke="#fff" stroke-width="2"/><rect x="1470.1" y="441.5" width="15" height="15" fill="none" stroke="#fff" stroke-width="2"/><rect x="1453.1" y="462.7" width="15" height="15" fill="none" stroke="#fff" stroke-width="2"/><rect x="1434.4" y="484.3" width="15" height="15" fill="none" stroke="#fff" stroke-width="2"/><rect x="1416.2" y="508.9" width="15" height="15" fill="none" stroke="#fff" stroke-width="2"/><rect x="1321.5" y="533.3" width="15" height="15" fill="none" stroke="#fff" stroke-width="2"/><rect x="1337.5" y="533.3" width="15" height="15" fill="none" stroke="#fff" stroke-width="2"/><rect x="1352.5" y="533.3" width="15" height="15" fill="none" stroke="#fff" stroke-width="2"/><rect x="1368.2" y="533.3" width="15" height="15" fill="none" stroke="#fff" stroke-width="2"/><rect x="1383.0" y="533.3" width="15" height="15" fill="none" stroke="#fff" stroke-width="2"/><rect x="1453.1" y="531.8" width="15" height="15" fill="none" stroke="#fff" stroke-width="2"/><rect x="1510.8" y="531.8" width="15" height="15" fill="none" stroke="#fff" stroke-width="2"/><rect x="1563.0" y="531.9" width="15" height="15" fill="none" stroke="#fff" stroke-width="2"/><rect x="1617.5" y="531.9" width="15" height="15" fill="none" stroke="#fff" stroke-width="2"/><rect x="1680.2" y="531.9" width="15" height="15" fill="none" stroke="#fff" stroke-width="2"/><rect x="1255.8" y="709.0" width="15" height="15" fill="none" stroke="#fff" stroke-width="2"/><rect x="1286.6" y="671.1" width="15" height="15" fill="none" stroke="#fff" stroke-width="2"/><rect x="1313.9" y="637.2" width="15" height="15" fill="none" stroke="#fff" stroke-width="2"/><rect x="1341.4" y="603.6" width="15" height="15" fill="none" stroke="#fff" stroke-width="2"/><rect x="1368.7" y="568.4" width="15" height="15" fill="none" stroke="#fff" stroke-width="2"/><rect x="1399.3" y="556.5" width="15" height="15" fill="none" stroke="#fff" stroke-width="2"/><rect x="1401.0" y="580.7" width="15" height="15" fill="none" stroke="#fff" stroke-width="2"/><rect x="1401.0" y="600.7" width="15" height="15" fill="none" stroke="#fff" stroke-width="2"/><rect x="1402.8" y="623.4" width="15" height="15" fill="none" stroke="#fff" stroke-width="2"/><rect x="1403.7" y="648.2" width="15" height="15" fill="none" stroke="#fff" stroke-width="2"/><rect x="1398" y="533.3" width="15" height="15" fill="none" stroke="#000" stroke-width="2.2"/><circle cx="1434.7" cy="372.6" r="4.8" fill="#0aa00a" stroke="#000" stroke-width="1.4"/><circle cx="1428.3" cy="412.6" r="4.8" fill="#4caf4c" stroke="#000" stroke-width="1.4"/><circle cx="1422.4" cy="447.4" r="4.8" fill="#6caf6c" stroke="#000" stroke-width="1.4"/><circle cx="1415.1" cy="479.7" r="4.8" fill="#88b888" stroke="#000" stroke-width="1.4"/><circle cx="1410" cy="510.5" r="4.8" fill="#a0c0a0" stroke="#000" stroke-width="1.4"/><circle cx="1508" cy="427.6" r="4.8" fill="#c8c000" stroke="#000" stroke-width="1.4"/><circle cx="1484.6" cy="452.6" r="4.8" fill="#c0b860" stroke="#000" stroke-width="1.4"/><circle cx="1463.9" cy="474.9" r="4.8" fill="#c0b870" stroke="#000" stroke-width="1.4"/><circle cx="1443.9" cy="496.4" r="4.8" fill="#c0b888" stroke="#000" stroke-width="1.4"/><circle cx="1423.9" cy="519.7" r="4.8" fill="#c0b8a0" stroke="#000" stroke-width="1.4"/><circle cx="1345.8" cy="545.3" r="4.8" fill="#10b0b0" stroke="#000" stroke-width="1.4"/><circle cx="1358.3" cy="543.5" r="4.8" fill="#50b0b0" stroke="#000" stroke-width="1.4"/><circle cx="1370.2" cy="542" r="4.8" fill="#70b0b0" stroke="#000" stroke-width="1.4"/><circle cx="1380.8" cy="542" r="4.8" fill="#88b8b8" stroke="#000" stroke-width="1.4"/><circle cx="1391.6" cy="540.8" r="4.8" fill="#a0b8b8" stroke="#000" stroke-width="1.4"/><circle cx="1627" cy="519.8" r="4.8" fill="#c02020" stroke="#000" stroke-width="1.4"/><circle cx="1578" cy="524" r="4.8" fill="#c04848" stroke="#000" stroke-width="1.4"/><circle cx="1535.4" cy="526.9" r="4.8" fill="#c05858" stroke="#000" stroke-width="1.4"/><circle cx="1491" cy="531" r="4.8" fill="#c07070" stroke="#000" stroke-width="1.4"/><circle cx="1446.2" cy="536.5" r="4.8" fill="#c09090" stroke="#000" stroke-width="1.4"/><circle cx="1277" cy="678.6" r="4.8" fill="#0000a0" stroke="#000" stroke-width="1.4"/><circle cx="1302" cy="652.5" r="4.8" fill="#5050b0" stroke="#000" stroke-width="1.4"/><circle cx="1326" cy="625.4" r="4.8" fill="#7070b0" stroke="#000" stroke-width="1.4"/><circle cx="1350.5" cy="597.4" r="4.8" fill="#8888b8" stroke="#000" stroke-width="1.4"/><circle cx="1376.6" cy="569.5" r="4.8" fill="#a0a0b8" stroke="#000" stroke-width="1.4"/><circle cx="1388.9" cy="627.8" r="4.8" fill="#c000c0" stroke="#000" stroke-width="1.4"/><circle cx="1391.6" cy="611.1" r="4.8" fill="#c050c0" stroke="#000" stroke-width="1.4"/><circle cx="1395" cy="592.8" r="4.8" fill="#c070b8" stroke="#000" stroke-width="1.4"/><circle cx="1397.8" cy="577.8" r="4.8" fill="#c088b8" stroke="#000" stroke-width="1.4"/><circle cx="1400.8" cy="559" r="4.8" fill="#c0a0b8" stroke="#000" stroke-width="1.4"/><circle cx="1405.5" cy="539.6" r="4.8" fill="#ffffff" stroke="#000" stroke-width="1.4"/><rect x="1723" y="307" width="15" height="15" fill="none" stroke="#fff" stroke-width="2"/><circle cx="1792.4" cy="336.8" r="4.8" fill="#c8c000" stroke="#000" stroke-width="1.4"/></svg>
<script>
(function(){
var L=[[0.1741,0.005],[0.1738,0.0049],[0.1733,0.0048],[0.1726,0.0048],[0.1714,0.0051],[0.1703,0.0058],[0.1689,0.0069],[0.1669,0.0086],[0.1644,0.0109],[0.1611,0.0138],[0.1566,0.0177],[0.151,0.0227],[0.144,0.0297],[0.1355,0.0399],[0.1241,0.0578],[0.1096,0.0868],[0.0913,0.1327],[0.0687,0.2007],[0.0454,0.295],[0.0235,0.4127],[0.0082,0.5384],[0.0039,0.6548],[0.0139,0.7502],[0.0389,0.812],[0.0743,0.8338],[0.1142,0.8262],[0.1547,0.8059],[0.1929,0.7816],[0.2296,0.7543],[0.2658,0.7243],[0.3016,0.6923],[0.3373,0.6589],[0.3731,0.6245],[0.4087,0.5896],[0.4441,0.5547],[0.4788,0.5202],[0.5125,0.4866],[0.5448,0.4544],[0.5752,0.4242],[0.6029,0.3965],[0.627,0.3725],[0.6482,0.3514],[0.6658,0.334],[0.6801,0.3197],[0.6915,0.3083],[0.7006,0.2993],[0.7079,0.292],[0.714,0.2859],[0.719,0.2809],[0.723,0.277],[0.726,0.274],[0.7283,0.2717],[0.73,0.27],[0.732,0.268],[0.7347,0.2653]];
var GAM=0.72, DARK=0.58;
function col(x,y,out,G){
  if(y<1e-4){out[0]=out[1]=out[2]=0;return;}
  var X=x/y, Z=(1-x-y)/y;
  var r=3.2406*X-1.5372-0.4986*Z, g=-0.9689*X+1.8758+0.0415*Z, b=0.0557*X-0.2040+1.0570*Z;
  var inside = r>=0 && g>=0 && b>=0;
  if(r<0)r=0; if(g<0)g=0; if(b<0)b=0;
  var m=Math.max(r,g,b); if(m<=0){m=1;}
  r=Math.pow(r/m,G); g=Math.pow(g/m,G); b=Math.pow(b/m,G);
  var f = inside?255:255*DARK;
  out[0]=r*f; out[1]=g*f; out[2]=b*f;
}
function draw(id,W,H,fx,fy,clip,G){
  var cv=document.getElementById(id); var ctx=cv.getContext('2d');
  var tmp=document.createElement('canvas'); tmp.width=W; tmp.height=H;
  var tc=tmp.getContext('2d'); var im=tc.createImageData(W,H); var d=im.data; var o=[0,0,0];
  for(var j=0;j<H;j++){for(var i=0;i<W;i++){
    var k=(j*W+i)*4, sr=0, sg=0, sb=0;
    for(var u=0;u<2;u++)for(var v=0;v<2;v++){col(fx(i+0.25+0.5*u),fy(j+0.25+0.5*v),o,G); sr+=o[0]; sg+=o[1]; sb+=o[2];}
    d[k]=sr/4; d[k+1]=sg/4; d[k+2]=sb/4; d[k+3]=255; }}
  tc.putImageData(im,0,0);
  if(clip){
    ctx.beginPath();
    var P=[]; for(var n=0;n<L.length;n++){P.push([(L[n][0]*865+1134.8)-1135,(757-L[n][1]*658)-205]);}
    var N=P.length; ctx.moveTo(P[0][0],P[0][1]);
    for(var n=0;n<N-1;n++){var p0=P[Math.max(n-1,0)],p1=P[n],p2=P[n+1],p3=P[Math.min(n+2,N-1)];
      ctx.bezierCurveTo(p1[0]+(p2[0]-p0[0])/6,p1[1]+(p2[1]-p0[1])/6,p2[0]-(p3[0]-p1[0])/6,p2[1]-(p3[1]-p1[1])/6,p2[0],p2[1]);}
    ctx.closePath(); ctx.clip();
  }
  ctx.drawImage(tmp,0,0);
}
draw('cv',727,552,function(i){return (1135+i-1134.8)/865;},function(j){return (757-(205+j))/656;},true,1.0);
draw('cv2',244,206,function(i){return 0.4193+(1611+i-1730.4)/4930;},function(j){return 0.5053-(213+j-314.4)/4150;},false,1.25);
})();
</script>
</body></html>
